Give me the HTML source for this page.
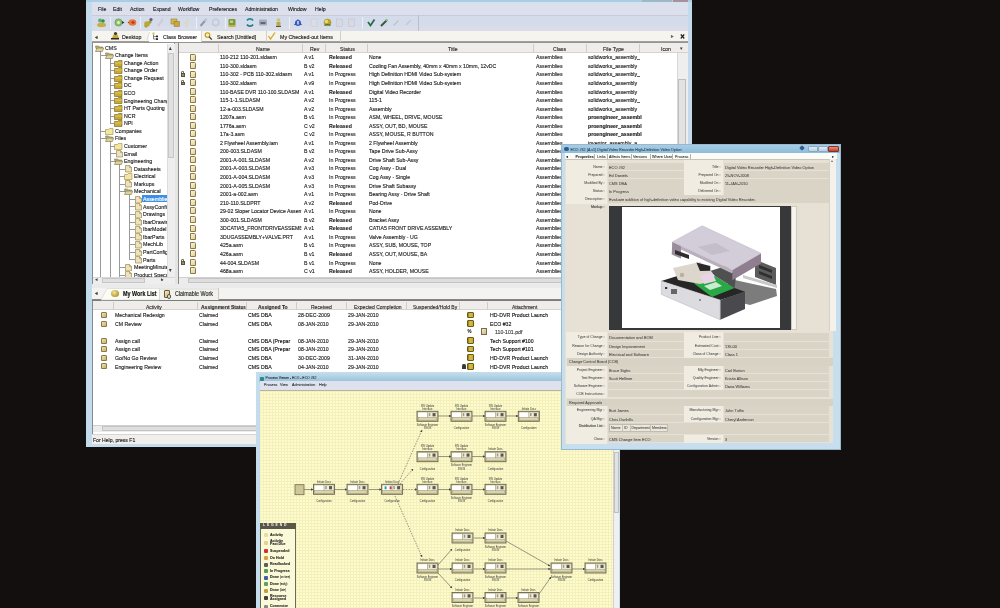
<!DOCTYPE html><html><head><meta charset="utf-8"><style>
html,body{margin:0;padding:0;}
body{width:1000px;height:608px;overflow:hidden;position:relative;background:#130f0f;font-family:"Liberation Sans",sans-serif;}
div{box-sizing:border-box;}
.t{position:absolute;white-space:nowrap;line-height:1;-webkit-text-stroke:0.15px currentColor;}
.s{-webkit-text-stroke:0.05px currentColor;}
</style></head><body><div style="position:absolute;left:0;top:0;width:1000px;height:608px;overflow:hidden;will-change:transform;">
<div style="position:absolute;left:86px;top:0px;width:606px;height:447px;background:#c3dbeb;"></div>
<div style="position:absolute;left:86px;top:0px;width:606px;height:2px;background:#a9cde2;"></div>
<div style="position:absolute;left:92px;top:2px;width:596px;height:1.5px;background:#d2e2ee;"></div>
<div style="position:absolute;left:641.5px;top:0px;width:15px;height:2px;background:#9fb8c8;"></div>
<div style="position:absolute;left:657px;top:0px;width:15px;height:2px;background:#9fb8c8;"></div>
<div style="position:absolute;left:672.5px;top:0px;width:15.5px;height:2px;background:#a8909c;"></div>
<div style="position:absolute;left:92px;top:3px;width:596px;height:12px;background:#dcdfec;"></div>
<div class="t" style="left:98px;top:6.40px;font-size:6.08px;color:#1c1c1c;font-weight:normal;transform:scaleX(0.855);transform-origin:0 0;">File</div>
<div class="t" style="left:113px;top:6.40px;font-size:6.08px;color:#1c1c1c;font-weight:normal;transform:scaleX(0.855);transform-origin:0 0;">Edit</div>
<div class="t" style="left:130px;top:6.40px;font-size:6.08px;color:#1c1c1c;font-weight:normal;transform:scaleX(0.855);transform-origin:0 0;">Action</div>
<div class="t" style="left:153px;top:6.40px;font-size:6.08px;color:#1c1c1c;font-weight:normal;transform:scaleX(0.855);transform-origin:0 0;">Expand</div>
<div class="t" style="left:178px;top:6.40px;font-size:6.08px;color:#1c1c1c;font-weight:normal;transform:scaleX(0.855);transform-origin:0 0;">Workflow</div>
<div class="t" style="left:209px;top:6.40px;font-size:6.08px;color:#1c1c1c;font-weight:normal;transform:scaleX(0.855);transform-origin:0 0;">Preferences</div>
<div class="t" style="left:245px;top:6.40px;font-size:6.08px;color:#1c1c1c;font-weight:normal;transform:scaleX(0.855);transform-origin:0 0;">Administration</div>
<div class="t" style="left:288px;top:6.40px;font-size:6.08px;color:#1c1c1c;font-weight:normal;transform:scaleX(0.855);transform-origin:0 0;">Window</div>
<div class="t" style="left:315px;top:6.40px;font-size:6.08px;color:#1c1c1c;font-weight:normal;transform:scaleX(0.855);transform-origin:0 0;">Help</div>
<div style="position:absolute;left:92px;top:14.5px;width:596px;height:16.5px;background:linear-gradient(#d4dbeb 0,#d4dbeb 65%,#d9dde9 66%,#d9dde9 100%);border-top:1px solid #cbcadb;"></div>
<div style="position:absolute;left:92px;top:31px;width:596px;height:11px;background:#f5f4ee;"></div>
<div style="position:absolute;left:92px;top:41px;width:596px;height:2.5px;background:linear-gradient(#a8a6a2,#85837f);"></div>
<div style="position:absolute;left:149px;top:31px;width:53px;height:11px;background:#ffffff;border-right:1px solid #d6d5cf;"></div>
<div class="t" style="left:95px;top:33.90px;font-size:6.20px;color:#3a3a3a;font-weight:normal;transform:scaleX(0.855);transform-origin:0 0;">◂</div>
<div class="t" style="left:122px;top:33.90px;font-size:6.20px;color:#1c1c1c;font-weight:normal;transform:scaleX(0.855);transform-origin:0 0;">Desktop</div>
<div class="t" style="left:163px;top:33.90px;font-size:6.20px;color:#1c1c1c;font-weight:normal;transform:scaleX(0.855);transform-origin:0 0;">Class Browser</div>
<div class="t" style="left:217px;top:33.90px;font-size:6.20px;color:#1c1c1c;font-weight:normal;transform:scaleX(0.855);transform-origin:0 0;">Search  [Untitled]</div>
<div class="t" style="left:280px;top:33.90px;font-size:6.20px;color:#1c1c1c;font-weight:normal;transform:scaleX(0.855);transform-origin:0 0;">My Checked-out Items</div>
<div style="position:absolute;left:266px;top:31px;width:1px;height:11px;background:#d0cfc8;"></div>
<div style="position:absolute;left:340px;top:31px;width:1px;height:11px;background:#d0cfc8;"></div>
<div class="t" style="left:671px;top:33.90px;font-size:5.85px;color:#666;font-weight:normal;transform:scaleX(0.855);transform-origin:0 0;">▸</div>
<div class="t" style="left:680px;top:33.40px;font-size:7.02px;color:#1c1c1c;font-weight:bold;transform:scaleX(0.855);transform-origin:0 0;">✕</div>
<div style="position:absolute;left:92px;top:43px;width:83px;height:241px;background:#fff;border:1px solid #8a8a8a;border-top:none;"></div>
<div style="position:absolute;left:167px;top:44px;width:8px;height:233px;background:#ebebeb;border-left:1px solid #d8d8d8;"></div>
<div style="position:absolute;left:93px;top:277px;width:74px;height:7px;background:#ececec;"></div>
<div style="position:absolute;left:174px;top:43px;width:4px;height:241px;background:#e4e4e2;border-left:1px solid #9a9a9a;"></div>
<div style="position:absolute;left:178px;top:43px;width:510px;height:241px;background:#fff;border-left:1px solid #8a8a8a;"></div>
<div style="position:absolute;left:179px;top:43px;width:509px;height:10px;background:#efedeb;border-bottom:1px solid #d6d3cf;"></div>
<div class="t" style="left:256px;top:45.90px;font-size:6.08px;color:#2a2a2a;font-weight:normal;transform:scaleX(0.855);transform-origin:0 0;">Name</div>
<div class="t" style="left:310px;top:45.90px;font-size:6.08px;color:#2a2a2a;font-weight:normal;transform:scaleX(0.855);transform-origin:0 0;">Rev</div>
<div class="t" style="left:340px;top:45.90px;font-size:6.08px;color:#2a2a2a;font-weight:normal;transform:scaleX(0.855);transform-origin:0 0;">Status</div>
<div class="t" style="left:448px;top:45.90px;font-size:6.08px;color:#2a2a2a;font-weight:normal;transform:scaleX(0.855);transform-origin:0 0;">Title</div>
<div class="t" style="left:553px;top:45.90px;font-size:6.08px;color:#2a2a2a;font-weight:normal;transform:scaleX(0.855);transform-origin:0 0;">Class</div>
<div class="t" style="left:603px;top:45.90px;font-size:6.08px;color:#2a2a2a;font-weight:normal;transform:scaleX(0.855);transform-origin:0 0;">File Type</div>
<div class="t" style="left:661px;top:45.90px;font-size:6.08px;color:#2a2a2a;font-weight:normal;transform:scaleX(0.855);transform-origin:0 0;">Icon</div>
<div style="position:absolute;left:218px;top:44px;width:1px;height:9px;background:#d0cdc8;"></div>
<div style="position:absolute;left:302px;top:44px;width:1px;height:9px;background:#d0cdc8;"></div>
<div style="position:absolute;left:325px;top:44px;width:1px;height:9px;background:#d0cdc8;"></div>
<div style="position:absolute;left:367px;top:44px;width:1px;height:9px;background:#d0cdc8;"></div>
<div style="position:absolute;left:533px;top:44px;width:1px;height:9px;background:#d0cdc8;"></div>
<div style="position:absolute;left:586px;top:44px;width:1px;height:9px;background:#d0cdc8;"></div>
<div style="position:absolute;left:639px;top:44px;width:1px;height:9px;background:#d0cdc8;"></div>
<div style="position:absolute;left:190px;top:53.5px;width:6px;height:7px;background:linear-gradient(135deg,#fbf4d8,#e0cf98);border:0.8px solid #8a7a48;border-radius:0 1.5px 0 0;"></div>
<div class="t" style="left:220px;top:54.30px;font-size:6.08px;color:#1c1c1c;font-weight:normal;transform:scaleX(0.855);transform-origin:0 0;width:95px;overflow:hidden;">110-212 110-201.sldasm</div>
<div class="t" style="left:304px;top:54.30px;font-size:6.08px;color:#1c1c1c;font-weight:normal;transform:scaleX(0.855);transform-origin:0 0;">A v1</div>
<div class="t" style="left:329px;top:54.30px;font-size:6.08px;color:#2a2a2a;font-weight:bold;transform:scaleX(0.855);transform-origin:0 0;">Released</div>
<div class="t" style="left:369px;top:54.30px;font-size:6.08px;color:#1c1c1c;font-weight:normal;transform:scaleX(0.855);transform-origin:0 0;width:190px;overflow:hidden;">None</div>
<div class="t" style="left:536px;top:54.30px;font-size:6.08px;color:#2a2a2a;font-weight:normal;transform:scaleX(0.855);transform-origin:0 0;">Assemblies</div>
<div class="t" style="left:588px;top:54.30px;font-size:6.08px;color:#1c1c1c;font-weight:normal;transform:scaleX(0.855);transform-origin:0 0;width:82px;overflow:hidden;">solidworks_assembly_</div>
<div style="position:absolute;left:190px;top:62.05px;width:6px;height:7px;background:linear-gradient(135deg,#fbf4d8,#e0cf98);border:0.8px solid #8a7a48;border-radius:0 1.5px 0 0;"></div>
<div class="t" style="left:220px;top:62.85px;font-size:6.08px;color:#1c1c1c;font-weight:normal;transform:scaleX(0.855);transform-origin:0 0;width:95px;overflow:hidden;">110-300.sldasm</div>
<div class="t" style="left:304px;top:62.85px;font-size:6.08px;color:#1c1c1c;font-weight:normal;transform:scaleX(0.855);transform-origin:0 0;">B v2</div>
<div class="t" style="left:329px;top:62.85px;font-size:6.08px;color:#2a2a2a;font-weight:bold;transform:scaleX(0.855);transform-origin:0 0;">Released</div>
<div class="t" style="left:369px;top:62.85px;font-size:6.08px;color:#1c1c1c;font-weight:normal;transform:scaleX(0.855);transform-origin:0 0;width:190px;overflow:hidden;">Cooling Fan Assembly, 40mm x 40mm x 10mm, 12vDC</div>
<div class="t" style="left:536px;top:62.85px;font-size:6.08px;color:#2a2a2a;font-weight:normal;transform:scaleX(0.855);transform-origin:0 0;">Assemblies</div>
<div class="t" style="left:588px;top:62.85px;font-size:6.08px;color:#1c1c1c;font-weight:normal;transform:scaleX(0.855);transform-origin:0 0;width:82px;overflow:hidden;">solidworks_assembly</div>
<div style="position:absolute;left:181px;top:71.1px;width:3.4px;height:3px;border:0.8px solid #6a6050;border-bottom:none;border-radius:1.5px 1.5px 0 0;"></div>
<div style="position:absolute;left:180.5px;top:73.3px;width:4.4px;height:3.5px;background:#9a8e70;border:0.5px solid #5a5040;"></div>
<div style="position:absolute;left:190px;top:70.6px;width:6px;height:7px;background:linear-gradient(135deg,#fbf4d8,#e0cf98);border:0.8px solid #8a7a48;border-radius:0 1.5px 0 0;"></div>
<div class="t" style="left:220px;top:71.40px;font-size:6.08px;color:#1c1c1c;font-weight:normal;transform:scaleX(0.855);transform-origin:0 0;width:95px;overflow:hidden;">110-302 - PCB 110-302.sldasm</div>
<div class="t" style="left:304px;top:71.40px;font-size:6.08px;color:#1c1c1c;font-weight:normal;transform:scaleX(0.855);transform-origin:0 0;">A v1</div>
<div class="t" style="left:329px;top:71.40px;font-size:6.08px;color:#2a2a2a;font-weight:normal;transform:scaleX(0.855);transform-origin:0 0;">In Progress</div>
<div class="t" style="left:369px;top:71.40px;font-size:6.08px;color:#1c1c1c;font-weight:normal;transform:scaleX(0.855);transform-origin:0 0;width:190px;overflow:hidden;">High Definition HDMI Video Sub-system</div>
<div class="t" style="left:536px;top:71.40px;font-size:6.08px;color:#2a2a2a;font-weight:normal;transform:scaleX(0.855);transform-origin:0 0;">Assemblies</div>
<div class="t" style="left:588px;top:71.40px;font-size:6.08px;color:#1c1c1c;font-weight:normal;transform:scaleX(0.855);transform-origin:0 0;width:82px;overflow:hidden;">solidworks_assembly_</div>
<div style="position:absolute;left:181px;top:79.65px;width:3.4px;height:3px;border:0.8px solid #6a6050;border-bottom:none;border-radius:1.5px 1.5px 0 0;"></div>
<div style="position:absolute;left:180.5px;top:81.85000000000001px;width:4.4px;height:3.5px;background:#9a8e70;border:0.5px solid #5a5040;"></div>
<div style="position:absolute;left:190px;top:79.15px;width:6px;height:7px;background:linear-gradient(135deg,#fbf4d8,#e0cf98);border:0.8px solid #8a7a48;border-radius:0 1.5px 0 0;"></div>
<div class="t" style="left:220px;top:79.95px;font-size:6.08px;color:#1c1c1c;font-weight:normal;transform:scaleX(0.855);transform-origin:0 0;width:95px;overflow:hidden;">110-302.sldasm</div>
<div class="t" style="left:304px;top:79.95px;font-size:6.08px;color:#1c1c1c;font-weight:normal;transform:scaleX(0.855);transform-origin:0 0;">A v9</div>
<div class="t" style="left:329px;top:79.95px;font-size:6.08px;color:#2a2a2a;font-weight:normal;transform:scaleX(0.855);transform-origin:0 0;">In Progress</div>
<div class="t" style="left:369px;top:79.95px;font-size:6.08px;color:#1c1c1c;font-weight:normal;transform:scaleX(0.855);transform-origin:0 0;width:190px;overflow:hidden;">High Definition HDMI Video Sub-system</div>
<div class="t" style="left:536px;top:79.95px;font-size:6.08px;color:#2a2a2a;font-weight:normal;transform:scaleX(0.855);transform-origin:0 0;">Assemblies</div>
<div class="t" style="left:588px;top:79.95px;font-size:6.08px;color:#1c1c1c;font-weight:normal;transform:scaleX(0.855);transform-origin:0 0;width:82px;overflow:hidden;">solidworks_assembly</div>
<div style="position:absolute;left:190px;top:87.7px;width:6px;height:7px;background:linear-gradient(135deg,#fbf4d8,#e0cf98);border:0.8px solid #8a7a48;border-radius:0 1.5px 0 0;"></div>
<div class="t" style="left:220px;top:88.50px;font-size:6.08px;color:#1c1c1c;font-weight:normal;transform:scaleX(0.855);transform-origin:0 0;width:95px;overflow:hidden;">110-BASE DVR 110-100.SLDASM</div>
<div class="t" style="left:304px;top:88.50px;font-size:6.08px;color:#1c1c1c;font-weight:normal;transform:scaleX(0.855);transform-origin:0 0;">A v1</div>
<div class="t" style="left:329px;top:88.50px;font-size:6.08px;color:#2a2a2a;font-weight:bold;transform:scaleX(0.855);transform-origin:0 0;">Released</div>
<div class="t" style="left:369px;top:88.50px;font-size:6.08px;color:#1c1c1c;font-weight:normal;transform:scaleX(0.855);transform-origin:0 0;width:190px;overflow:hidden;">Digital Video Recorder</div>
<div class="t" style="left:536px;top:88.50px;font-size:6.08px;color:#2a2a2a;font-weight:normal;transform:scaleX(0.855);transform-origin:0 0;">Assemblies</div>
<div class="t" style="left:588px;top:88.50px;font-size:6.08px;color:#1c1c1c;font-weight:normal;transform:scaleX(0.855);transform-origin:0 0;width:82px;overflow:hidden;">solidworks_assembly</div>
<div style="position:absolute;left:190px;top:96.25px;width:6px;height:7px;background:linear-gradient(135deg,#fbf4d8,#e0cf98);border:0.8px solid #8a7a48;border-radius:0 1.5px 0 0;"></div>
<div class="t" style="left:220px;top:97.05px;font-size:6.08px;color:#1c1c1c;font-weight:normal;transform:scaleX(0.855);transform-origin:0 0;width:95px;overflow:hidden;">115-1-1.SLDASM</div>
<div class="t" style="left:304px;top:97.05px;font-size:6.08px;color:#1c1c1c;font-weight:normal;transform:scaleX(0.855);transform-origin:0 0;">A v2</div>
<div class="t" style="left:329px;top:97.05px;font-size:6.08px;color:#2a2a2a;font-weight:normal;transform:scaleX(0.855);transform-origin:0 0;">In Progress</div>
<div class="t" style="left:369px;top:97.05px;font-size:6.08px;color:#1c1c1c;font-weight:normal;transform:scaleX(0.855);transform-origin:0 0;width:190px;overflow:hidden;">115-1</div>
<div class="t" style="left:536px;top:97.05px;font-size:6.08px;color:#2a2a2a;font-weight:normal;transform:scaleX(0.855);transform-origin:0 0;">Assemblies</div>
<div class="t" style="left:588px;top:97.05px;font-size:6.08px;color:#1c1c1c;font-weight:normal;transform:scaleX(0.855);transform-origin:0 0;width:82px;overflow:hidden;">solidworks_assembly_</div>
<div style="position:absolute;left:190px;top:104.80000000000001px;width:6px;height:7px;background:linear-gradient(135deg,#fbf4d8,#e0cf98);border:0.8px solid #8a7a48;border-radius:0 1.5px 0 0;"></div>
<div class="t" style="left:220px;top:105.60px;font-size:6.08px;color:#1c1c1c;font-weight:normal;transform:scaleX(0.855);transform-origin:0 0;width:95px;overflow:hidden;">12-a-003.SLDASM</div>
<div class="t" style="left:304px;top:105.60px;font-size:6.08px;color:#1c1c1c;font-weight:normal;transform:scaleX(0.855);transform-origin:0 0;">A v2</div>
<div class="t" style="left:329px;top:105.60px;font-size:6.08px;color:#2a2a2a;font-weight:normal;transform:scaleX(0.855);transform-origin:0 0;">In Progress</div>
<div class="t" style="left:369px;top:105.60px;font-size:6.08px;color:#1c1c1c;font-weight:normal;transform:scaleX(0.855);transform-origin:0 0;width:190px;overflow:hidden;">Assembly</div>
<div class="t" style="left:536px;top:105.60px;font-size:6.08px;color:#2a2a2a;font-weight:normal;transform:scaleX(0.855);transform-origin:0 0;">Assemblies</div>
<div class="t" style="left:588px;top:105.60px;font-size:6.08px;color:#1c1c1c;font-weight:normal;transform:scaleX(0.855);transform-origin:0 0;width:82px;overflow:hidden;">solidworks_assembly</div>
<div style="position:absolute;left:190px;top:113.35000000000001px;width:6px;height:7px;background:linear-gradient(135deg,#fbf4d8,#e0cf98);border:0.8px solid #8a7a48;border-radius:0 1.5px 0 0;"></div>
<div class="t" style="left:220px;top:114.15px;font-size:6.08px;color:#1c1c1c;font-weight:normal;transform:scaleX(0.855);transform-origin:0 0;width:95px;overflow:hidden;">1207a.asm</div>
<div class="t" style="left:304px;top:114.15px;font-size:6.08px;color:#1c1c1c;font-weight:normal;transform:scaleX(0.855);transform-origin:0 0;">B v1</div>
<div class="t" style="left:329px;top:114.15px;font-size:6.08px;color:#2a2a2a;font-weight:normal;transform:scaleX(0.855);transform-origin:0 0;">In Progress</div>
<div class="t" style="left:369px;top:114.15px;font-size:6.08px;color:#1c1c1c;font-weight:normal;transform:scaleX(0.855);transform-origin:0 0;width:190px;overflow:hidden;">ASM, WHEEL, DRIVE, MOUSE</div>
<div class="t" style="left:536px;top:114.15px;font-size:6.08px;color:#2a2a2a;font-weight:normal;transform:scaleX(0.855);transform-origin:0 0;">Assemblies</div>
<div class="t" style="left:588px;top:114.15px;font-size:6.08px;color:#1c1c1c;font-weight:bold;transform:scaleX(0.855);transform-origin:0 0;width:82px;overflow:hidden;">proengineer_assembl</div>
<div style="position:absolute;left:190px;top:121.9px;width:6px;height:7px;background:linear-gradient(135deg,#fbf4d8,#e0cf98);border:0.8px solid #8a7a48;border-radius:0 1.5px 0 0;"></div>
<div class="t" style="left:220px;top:122.70px;font-size:6.08px;color:#1c1c1c;font-weight:normal;transform:scaleX(0.855);transform-origin:0 0;width:95px;overflow:hidden;">1776a.asm</div>
<div class="t" style="left:304px;top:122.70px;font-size:6.08px;color:#1c1c1c;font-weight:normal;transform:scaleX(0.855);transform-origin:0 0;">C v2</div>
<div class="t" style="left:329px;top:122.70px;font-size:6.08px;color:#2a2a2a;font-weight:bold;transform:scaleX(0.855);transform-origin:0 0;">Released</div>
<div class="t" style="left:369px;top:122.70px;font-size:6.08px;color:#1c1c1c;font-weight:normal;transform:scaleX(0.855);transform-origin:0 0;width:190px;overflow:hidden;">ASSY, OUT, BD, MOUSE</div>
<div class="t" style="left:536px;top:122.70px;font-size:6.08px;color:#2a2a2a;font-weight:normal;transform:scaleX(0.855);transform-origin:0 0;">Assemblies</div>
<div class="t" style="left:588px;top:122.70px;font-size:6.08px;color:#1c1c1c;font-weight:bold;transform:scaleX(0.855);transform-origin:0 0;width:82px;overflow:hidden;">proengineer_assembl</div>
<div style="position:absolute;left:190px;top:130.45px;width:6px;height:7px;background:linear-gradient(135deg,#fbf4d8,#e0cf98);border:0.8px solid #8a7a48;border-radius:0 1.5px 0 0;"></div>
<div class="t" style="left:220px;top:131.25px;font-size:6.08px;color:#1c1c1c;font-weight:normal;transform:scaleX(0.855);transform-origin:0 0;width:95px;overflow:hidden;">17a-3.asm</div>
<div class="t" style="left:304px;top:131.25px;font-size:6.08px;color:#1c1c1c;font-weight:normal;transform:scaleX(0.855);transform-origin:0 0;">C v2</div>
<div class="t" style="left:329px;top:131.25px;font-size:6.08px;color:#2a2a2a;font-weight:normal;transform:scaleX(0.855);transform-origin:0 0;">In Progress</div>
<div class="t" style="left:369px;top:131.25px;font-size:6.08px;color:#1c1c1c;font-weight:normal;transform:scaleX(0.855);transform-origin:0 0;width:190px;overflow:hidden;">ASSY, MOUSE, R BUTTON</div>
<div class="t" style="left:536px;top:131.25px;font-size:6.08px;color:#2a2a2a;font-weight:normal;transform:scaleX(0.855);transform-origin:0 0;">Assemblies</div>
<div class="t" style="left:588px;top:131.25px;font-size:6.08px;color:#1c1c1c;font-weight:bold;transform:scaleX(0.855);transform-origin:0 0;width:82px;overflow:hidden;">proengineer_assembl</div>
<div style="position:absolute;left:190px;top:139.0px;width:6px;height:7px;background:linear-gradient(135deg,#fbf4d8,#e0cf98);border:0.8px solid #8a7a48;border-radius:0 1.5px 0 0;"></div>
<div class="t" style="left:220px;top:139.80px;font-size:6.08px;color:#1c1c1c;font-weight:normal;transform:scaleX(0.855);transform-origin:0 0;width:95px;overflow:hidden;">2 Flywheel Assembly.iam</div>
<div class="t" style="left:304px;top:139.80px;font-size:6.08px;color:#1c1c1c;font-weight:normal;transform:scaleX(0.855);transform-origin:0 0;">A v1</div>
<div class="t" style="left:329px;top:139.80px;font-size:6.08px;color:#2a2a2a;font-weight:normal;transform:scaleX(0.855);transform-origin:0 0;">In Progress</div>
<div class="t" style="left:369px;top:139.80px;font-size:6.08px;color:#1c1c1c;font-weight:normal;transform:scaleX(0.855);transform-origin:0 0;width:190px;overflow:hidden;">2 Flywheel Assembly</div>
<div class="t" style="left:536px;top:139.80px;font-size:6.08px;color:#2a2a2a;font-weight:normal;transform:scaleX(0.855);transform-origin:0 0;">Assemblies</div>
<div class="t" style="left:588px;top:139.80px;font-size:6.08px;color:#1c1c1c;font-weight:normal;transform:scaleX(0.855);transform-origin:0 0;width:82px;overflow:hidden;">inventor_assembly_a</div>
<div style="position:absolute;left:190px;top:147.55px;width:6px;height:7px;background:linear-gradient(135deg,#fbf4d8,#e0cf98);border:0.8px solid #8a7a48;border-radius:0 1.5px 0 0;"></div>
<div class="t" style="left:220px;top:148.35px;font-size:6.08px;color:#1c1c1c;font-weight:normal;transform:scaleX(0.855);transform-origin:0 0;width:95px;overflow:hidden;">200-003.SLDASM</div>
<div class="t" style="left:304px;top:148.35px;font-size:6.08px;color:#1c1c1c;font-weight:normal;transform:scaleX(0.855);transform-origin:0 0;">B v2</div>
<div class="t" style="left:329px;top:148.35px;font-size:6.08px;color:#2a2a2a;font-weight:normal;transform:scaleX(0.855);transform-origin:0 0;">In Progress</div>
<div class="t" style="left:369px;top:148.35px;font-size:6.08px;color:#1c1c1c;font-weight:normal;transform:scaleX(0.855);transform-origin:0 0;width:190px;overflow:hidden;">Tape Drive Sub-Assy</div>
<div class="t" style="left:536px;top:148.35px;font-size:6.08px;color:#2a2a2a;font-weight:normal;transform:scaleX(0.855);transform-origin:0 0;">Assemblies</div>
<div class="t" style="left:588px;top:148.35px;font-size:6.08px;color:#1c1c1c;font-weight:normal;transform:scaleX(0.855);transform-origin:0 0;width:82px;overflow:hidden;">solidworks_assembly</div>
<div style="position:absolute;left:190px;top:156.10000000000002px;width:6px;height:7px;background:linear-gradient(135deg,#fbf4d8,#e0cf98);border:0.8px solid #8a7a48;border-radius:0 1.5px 0 0;"></div>
<div class="t" style="left:220px;top:156.90px;font-size:6.08px;color:#1c1c1c;font-weight:normal;transform:scaleX(0.855);transform-origin:0 0;width:95px;overflow:hidden;">2001-A-001.SLDASM</div>
<div class="t" style="left:304px;top:156.90px;font-size:6.08px;color:#1c1c1c;font-weight:normal;transform:scaleX(0.855);transform-origin:0 0;">A v2</div>
<div class="t" style="left:329px;top:156.90px;font-size:6.08px;color:#2a2a2a;font-weight:normal;transform:scaleX(0.855);transform-origin:0 0;">In Progress</div>
<div class="t" style="left:369px;top:156.90px;font-size:6.08px;color:#1c1c1c;font-weight:normal;transform:scaleX(0.855);transform-origin:0 0;width:190px;overflow:hidden;">Drive Shaft Sub-Assy</div>
<div class="t" style="left:536px;top:156.90px;font-size:6.08px;color:#2a2a2a;font-weight:normal;transform:scaleX(0.855);transform-origin:0 0;">Assemblies</div>
<div class="t" style="left:588px;top:156.90px;font-size:6.08px;color:#1c1c1c;font-weight:normal;transform:scaleX(0.855);transform-origin:0 0;width:82px;overflow:hidden;">solidworks_assembly</div>
<div style="position:absolute;left:190px;top:164.65px;width:6px;height:7px;background:linear-gradient(135deg,#fbf4d8,#e0cf98);border:0.8px solid #8a7a48;border-radius:0 1.5px 0 0;"></div>
<div class="t" style="left:220px;top:165.45px;font-size:6.08px;color:#1c1c1c;font-weight:normal;transform:scaleX(0.855);transform-origin:0 0;width:95px;overflow:hidden;">2001-A-003.SLDASM</div>
<div class="t" style="left:304px;top:165.45px;font-size:6.08px;color:#1c1c1c;font-weight:normal;transform:scaleX(0.855);transform-origin:0 0;">A v3</div>
<div class="t" style="left:329px;top:165.45px;font-size:6.08px;color:#2a2a2a;font-weight:normal;transform:scaleX(0.855);transform-origin:0 0;">In Progress</div>
<div class="t" style="left:369px;top:165.45px;font-size:6.08px;color:#1c1c1c;font-weight:normal;transform:scaleX(0.855);transform-origin:0 0;width:190px;overflow:hidden;">Cog Assy - Dual</div>
<div class="t" style="left:536px;top:165.45px;font-size:6.08px;color:#2a2a2a;font-weight:normal;transform:scaleX(0.855);transform-origin:0 0;">Assemblies</div>
<div class="t" style="left:588px;top:165.45px;font-size:6.08px;color:#1c1c1c;font-weight:normal;transform:scaleX(0.855);transform-origin:0 0;width:82px;overflow:hidden;">solidworks_assembly</div>
<div style="position:absolute;left:190px;top:173.20000000000002px;width:6px;height:7px;background:linear-gradient(135deg,#fbf4d8,#e0cf98);border:0.8px solid #8a7a48;border-radius:0 1.5px 0 0;"></div>
<div class="t" style="left:220px;top:174.00px;font-size:6.08px;color:#1c1c1c;font-weight:normal;transform:scaleX(0.855);transform-origin:0 0;width:95px;overflow:hidden;">2001-A-004.SLDASM</div>
<div class="t" style="left:304px;top:174.00px;font-size:6.08px;color:#1c1c1c;font-weight:normal;transform:scaleX(0.855);transform-origin:0 0;">A v3</div>
<div class="t" style="left:329px;top:174.00px;font-size:6.08px;color:#2a2a2a;font-weight:normal;transform:scaleX(0.855);transform-origin:0 0;">In Progress</div>
<div class="t" style="left:369px;top:174.00px;font-size:6.08px;color:#1c1c1c;font-weight:normal;transform:scaleX(0.855);transform-origin:0 0;width:190px;overflow:hidden;">Cog Assy - Single</div>
<div class="t" style="left:536px;top:174.00px;font-size:6.08px;color:#2a2a2a;font-weight:normal;transform:scaleX(0.855);transform-origin:0 0;">Assemblies</div>
<div class="t" style="left:588px;top:174.00px;font-size:6.08px;color:#1c1c1c;font-weight:normal;transform:scaleX(0.855);transform-origin:0 0;width:82px;overflow:hidden;">solidworks_assembly</div>
<div style="position:absolute;left:190px;top:181.75px;width:6px;height:7px;background:linear-gradient(135deg,#fbf4d8,#e0cf98);border:0.8px solid #8a7a48;border-radius:0 1.5px 0 0;"></div>
<div class="t" style="left:220px;top:182.55px;font-size:6.08px;color:#1c1c1c;font-weight:normal;transform:scaleX(0.855);transform-origin:0 0;width:95px;overflow:hidden;">2001-A-005.SLDASM</div>
<div class="t" style="left:304px;top:182.55px;font-size:6.08px;color:#1c1c1c;font-weight:normal;transform:scaleX(0.855);transform-origin:0 0;">A v3</div>
<div class="t" style="left:329px;top:182.55px;font-size:6.08px;color:#2a2a2a;font-weight:normal;transform:scaleX(0.855);transform-origin:0 0;">In Progress</div>
<div class="t" style="left:369px;top:182.55px;font-size:6.08px;color:#1c1c1c;font-weight:normal;transform:scaleX(0.855);transform-origin:0 0;width:190px;overflow:hidden;">Drive Shaft Subassy</div>
<div class="t" style="left:536px;top:182.55px;font-size:6.08px;color:#2a2a2a;font-weight:normal;transform:scaleX(0.855);transform-origin:0 0;">Assemblies</div>
<div class="t" style="left:588px;top:182.55px;font-size:6.08px;color:#1c1c1c;font-weight:normal;transform:scaleX(0.855);transform-origin:0 0;width:82px;overflow:hidden;">solidworks_assembly</div>
<div style="position:absolute;left:190px;top:190.3px;width:6px;height:7px;background:linear-gradient(135deg,#fbf4d8,#e0cf98);border:0.8px solid #8a7a48;border-radius:0 1.5px 0 0;"></div>
<div class="t" style="left:220px;top:191.10px;font-size:6.08px;color:#1c1c1c;font-weight:normal;transform:scaleX(0.855);transform-origin:0 0;width:95px;overflow:hidden;">2001-a-002.asm</div>
<div class="t" style="left:304px;top:191.10px;font-size:6.08px;color:#1c1c1c;font-weight:normal;transform:scaleX(0.855);transform-origin:0 0;">A v1</div>
<div class="t" style="left:329px;top:191.10px;font-size:6.08px;color:#2a2a2a;font-weight:normal;transform:scaleX(0.855);transform-origin:0 0;">In Progress</div>
<div class="t" style="left:369px;top:191.10px;font-size:6.08px;color:#1c1c1c;font-weight:normal;transform:scaleX(0.855);transform-origin:0 0;width:190px;overflow:hidden;">Bearing Assy - Drive Shaft</div>
<div class="t" style="left:536px;top:191.10px;font-size:6.08px;color:#2a2a2a;font-weight:normal;transform:scaleX(0.855);transform-origin:0 0;">Assemblies</div>
<div class="t" style="left:588px;top:191.10px;font-size:6.08px;color:#1c1c1c;font-weight:normal;transform:scaleX(0.855);transform-origin:0 0;width:82px;overflow:hidden;">proengineer_assembl</div>
<div style="position:absolute;left:190px;top:198.85000000000002px;width:6px;height:7px;background:linear-gradient(135deg,#fbf4d8,#e0cf98);border:0.8px solid #8a7a48;border-radius:0 1.5px 0 0;"></div>
<div class="t" style="left:220px;top:199.65px;font-size:6.08px;color:#1c1c1c;font-weight:normal;transform:scaleX(0.855);transform-origin:0 0;width:95px;overflow:hidden;">210-110.SLDPRT</div>
<div class="t" style="left:304px;top:199.65px;font-size:6.08px;color:#1c1c1c;font-weight:normal;transform:scaleX(0.855);transform-origin:0 0;">A v2</div>
<div class="t" style="left:329px;top:199.65px;font-size:6.08px;color:#2a2a2a;font-weight:bold;transform:scaleX(0.855);transform-origin:0 0;">Released</div>
<div class="t" style="left:369px;top:199.65px;font-size:6.08px;color:#1c1c1c;font-weight:normal;transform:scaleX(0.855);transform-origin:0 0;width:190px;overflow:hidden;">Pod-Drive</div>
<div class="t" style="left:536px;top:199.65px;font-size:6.08px;color:#2a2a2a;font-weight:normal;transform:scaleX(0.855);transform-origin:0 0;">Assemblies</div>
<div class="t" style="left:588px;top:199.65px;font-size:6.08px;color:#1c1c1c;font-weight:normal;transform:scaleX(0.855);transform-origin:0 0;width:82px;overflow:hidden;">solidworks_part</div>
<div style="position:absolute;left:190px;top:207.4px;width:6px;height:7px;background:linear-gradient(135deg,#fbf4d8,#e0cf98);border:0.8px solid #8a7a48;border-radius:0 1.5px 0 0;"></div>
<div class="t" style="left:220px;top:208.20px;font-size:6.08px;color:#1c1c1c;font-weight:normal;transform:scaleX(0.855);transform-origin:0 0;width:95px;overflow:hidden;">29-02 Sloper Locator Device Assembly</div>
<div class="t" style="left:304px;top:208.20px;font-size:6.08px;color:#1c1c1c;font-weight:normal;transform:scaleX(0.855);transform-origin:0 0;">A v1</div>
<div class="t" style="left:329px;top:208.20px;font-size:6.08px;color:#2a2a2a;font-weight:normal;transform:scaleX(0.855);transform-origin:0 0;">In Progress</div>
<div class="t" style="left:369px;top:208.20px;font-size:6.08px;color:#1c1c1c;font-weight:normal;transform:scaleX(0.855);transform-origin:0 0;width:190px;overflow:hidden;">None</div>
<div class="t" style="left:536px;top:208.20px;font-size:6.08px;color:#2a2a2a;font-weight:normal;transform:scaleX(0.855);transform-origin:0 0;">Assemblies</div>
<div class="t" style="left:588px;top:208.20px;font-size:6.08px;color:#1c1c1c;font-weight:normal;transform:scaleX(0.855);transform-origin:0 0;width:82px;overflow:hidden;">solidworks_assembly</div>
<div style="position:absolute;left:190px;top:215.95000000000002px;width:6px;height:7px;background:linear-gradient(135deg,#fbf4d8,#e0cf98);border:0.8px solid #8a7a48;border-radius:0 1.5px 0 0;"></div>
<div class="t" style="left:220px;top:216.75px;font-size:6.08px;color:#1c1c1c;font-weight:normal;transform:scaleX(0.855);transform-origin:0 0;width:95px;overflow:hidden;">300-001.SLDASM</div>
<div class="t" style="left:304px;top:216.75px;font-size:6.08px;color:#1c1c1c;font-weight:normal;transform:scaleX(0.855);transform-origin:0 0;">B v2</div>
<div class="t" style="left:329px;top:216.75px;font-size:6.08px;color:#2a2a2a;font-weight:bold;transform:scaleX(0.855);transform-origin:0 0;">Released</div>
<div class="t" style="left:369px;top:216.75px;font-size:6.08px;color:#1c1c1c;font-weight:normal;transform:scaleX(0.855);transform-origin:0 0;width:190px;overflow:hidden;">Bracket Assy</div>
<div class="t" style="left:536px;top:216.75px;font-size:6.08px;color:#2a2a2a;font-weight:normal;transform:scaleX(0.855);transform-origin:0 0;">Assemblies</div>
<div class="t" style="left:588px;top:216.75px;font-size:6.08px;color:#1c1c1c;font-weight:normal;transform:scaleX(0.855);transform-origin:0 0;width:82px;overflow:hidden;">solidworks_assembly</div>
<div style="position:absolute;left:190px;top:224.5px;width:6px;height:7px;background:linear-gradient(135deg,#fbf4d8,#e0cf98);border:0.8px solid #8a7a48;border-radius:0 1.5px 0 0;"></div>
<div class="t" style="left:220px;top:225.30px;font-size:6.08px;color:#1c1c1c;font-weight:normal;transform:scaleX(0.855);transform-origin:0 0;width:95px;overflow:hidden;">3DCATIA5_FRONTDRIVEASSEMBLY</div>
<div class="t" style="left:304px;top:225.30px;font-size:6.08px;color:#1c1c1c;font-weight:normal;transform:scaleX(0.855);transform-origin:0 0;">A v1</div>
<div class="t" style="left:329px;top:225.30px;font-size:6.08px;color:#2a2a2a;font-weight:bold;transform:scaleX(0.855);transform-origin:0 0;">Released</div>
<div class="t" style="left:369px;top:225.30px;font-size:6.08px;color:#1c1c1c;font-weight:normal;transform:scaleX(0.855);transform-origin:0 0;width:190px;overflow:hidden;">CATIA5 FRONT DRIVE ASSEMBLY</div>
<div class="t" style="left:536px;top:225.30px;font-size:6.08px;color:#2a2a2a;font-weight:normal;transform:scaleX(0.855);transform-origin:0 0;">Assemblies</div>
<div class="t" style="left:588px;top:225.30px;font-size:6.08px;color:#1c1c1c;font-weight:normal;transform:scaleX(0.855);transform-origin:0 0;width:82px;overflow:hidden;">catia_assembly</div>
<div style="position:absolute;left:190px;top:233.05px;width:6px;height:7px;background:linear-gradient(135deg,#fbf4d8,#e0cf98);border:0.8px solid #8a7a48;border-radius:0 1.5px 0 0;"></div>
<div class="t" style="left:220px;top:233.85px;font-size:6.08px;color:#1c1c1c;font-weight:normal;transform:scaleX(0.855);transform-origin:0 0;width:95px;overflow:hidden;">3DUGASSEMBLY+VALVE.PRT</div>
<div class="t" style="left:304px;top:233.85px;font-size:6.08px;color:#1c1c1c;font-weight:normal;transform:scaleX(0.855);transform-origin:0 0;">A v1</div>
<div class="t" style="left:329px;top:233.85px;font-size:6.08px;color:#2a2a2a;font-weight:normal;transform:scaleX(0.855);transform-origin:0 0;">In Progress</div>
<div class="t" style="left:369px;top:233.85px;font-size:6.08px;color:#1c1c1c;font-weight:normal;transform:scaleX(0.855);transform-origin:0 0;width:190px;overflow:hidden;">Valve Assembly - UG</div>
<div class="t" style="left:536px;top:233.85px;font-size:6.08px;color:#2a2a2a;font-weight:normal;transform:scaleX(0.855);transform-origin:0 0;">Assemblies</div>
<div class="t" style="left:588px;top:233.85px;font-size:6.08px;color:#1c1c1c;font-weight:normal;transform:scaleX(0.855);transform-origin:0 0;width:82px;overflow:hidden;">ug_assembly</div>
<div style="position:absolute;left:190px;top:241.60000000000002px;width:6px;height:7px;background:linear-gradient(135deg,#fbf4d8,#e0cf98);border:0.8px solid #8a7a48;border-radius:0 1.5px 0 0;"></div>
<div class="t" style="left:220px;top:242.40px;font-size:6.08px;color:#1c1c1c;font-weight:normal;transform:scaleX(0.855);transform-origin:0 0;width:95px;overflow:hidden;">425a.asm</div>
<div class="t" style="left:304px;top:242.40px;font-size:6.08px;color:#1c1c1c;font-weight:normal;transform:scaleX(0.855);transform-origin:0 0;">B v1</div>
<div class="t" style="left:329px;top:242.40px;font-size:6.08px;color:#2a2a2a;font-weight:normal;transform:scaleX(0.855);transform-origin:0 0;">In Progress</div>
<div class="t" style="left:369px;top:242.40px;font-size:6.08px;color:#1c1c1c;font-weight:normal;transform:scaleX(0.855);transform-origin:0 0;width:190px;overflow:hidden;">ASSY, SUB, MOUSE, TOP</div>
<div class="t" style="left:536px;top:242.40px;font-size:6.08px;color:#2a2a2a;font-weight:normal;transform:scaleX(0.855);transform-origin:0 0;">Assemblies</div>
<div class="t" style="left:588px;top:242.40px;font-size:6.08px;color:#1c1c1c;font-weight:normal;transform:scaleX(0.855);transform-origin:0 0;width:82px;overflow:hidden;">proengineer_assembl</div>
<div style="position:absolute;left:190px;top:250.15px;width:6px;height:7px;background:linear-gradient(135deg,#fbf4d8,#e0cf98);border:0.8px solid #8a7a48;border-radius:0 1.5px 0 0;"></div>
<div class="t" style="left:220px;top:250.95px;font-size:6.08px;color:#1c1c1c;font-weight:normal;transform:scaleX(0.855);transform-origin:0 0;width:95px;overflow:hidden;">426a.asm</div>
<div class="t" style="left:304px;top:250.95px;font-size:6.08px;color:#1c1c1c;font-weight:normal;transform:scaleX(0.855);transform-origin:0 0;">B v1</div>
<div class="t" style="left:329px;top:250.95px;font-size:6.08px;color:#2a2a2a;font-weight:bold;transform:scaleX(0.855);transform-origin:0 0;">Released</div>
<div class="t" style="left:369px;top:250.95px;font-size:6.08px;color:#1c1c1c;font-weight:normal;transform:scaleX(0.855);transform-origin:0 0;width:190px;overflow:hidden;">ASSY, OUT, MOUSE, BA</div>
<div class="t" style="left:536px;top:250.95px;font-size:6.08px;color:#2a2a2a;font-weight:normal;transform:scaleX(0.855);transform-origin:0 0;">Assemblies</div>
<div class="t" style="left:588px;top:250.95px;font-size:6.08px;color:#1c1c1c;font-weight:normal;transform:scaleX(0.855);transform-origin:0 0;width:82px;overflow:hidden;">proengineer_assembl</div>
<div style="position:absolute;left:181px;top:259.20000000000005px;width:3.4px;height:3px;border:0.8px solid #6a6050;border-bottom:none;border-radius:1.5px 1.5px 0 0;"></div>
<div style="position:absolute;left:180.5px;top:261.40000000000003px;width:4.4px;height:3.5px;background:#9a8e70;border:0.5px solid #5a5040;"></div>
<div style="position:absolute;left:190px;top:258.70000000000005px;width:6px;height:7px;background:linear-gradient(135deg,#fbf4d8,#e0cf98);border:0.8px solid #8a7a48;border-radius:0 1.5px 0 0;"></div>
<div class="t" style="left:220px;top:259.50px;font-size:6.08px;color:#1c1c1c;font-weight:normal;transform:scaleX(0.855);transform-origin:0 0;width:95px;overflow:hidden;">44-004.SLDASM</div>
<div class="t" style="left:304px;top:259.50px;font-size:6.08px;color:#1c1c1c;font-weight:normal;transform:scaleX(0.855);transform-origin:0 0;">B v1</div>
<div class="t" style="left:329px;top:259.50px;font-size:6.08px;color:#2a2a2a;font-weight:normal;transform:scaleX(0.855);transform-origin:0 0;">In Progress</div>
<div class="t" style="left:369px;top:259.50px;font-size:6.08px;color:#1c1c1c;font-weight:normal;transform:scaleX(0.855);transform-origin:0 0;width:190px;overflow:hidden;">None</div>
<div class="t" style="left:536px;top:259.50px;font-size:6.08px;color:#2a2a2a;font-weight:normal;transform:scaleX(0.855);transform-origin:0 0;">Assemblies</div>
<div class="t" style="left:588px;top:259.50px;font-size:6.08px;color:#1c1c1c;font-weight:normal;transform:scaleX(0.855);transform-origin:0 0;width:82px;overflow:hidden;">solidworks_assembly</div>
<div style="position:absolute;left:190px;top:267.25px;width:6px;height:7px;background:linear-gradient(135deg,#fbf4d8,#e0cf98);border:0.8px solid #8a7a48;border-radius:0 1.5px 0 0;"></div>
<div class="t" style="left:220px;top:268.05px;font-size:6.08px;color:#1c1c1c;font-weight:normal;transform:scaleX(0.855);transform-origin:0 0;width:95px;overflow:hidden;">468a.asm</div>
<div class="t" style="left:304px;top:268.05px;font-size:6.08px;color:#1c1c1c;font-weight:normal;transform:scaleX(0.855);transform-origin:0 0;">C v1</div>
<div class="t" style="left:329px;top:268.05px;font-size:6.08px;color:#2a2a2a;font-weight:bold;transform:scaleX(0.855);transform-origin:0 0;">Released</div>
<div class="t" style="left:369px;top:268.05px;font-size:6.08px;color:#1c1c1c;font-weight:normal;transform:scaleX(0.855);transform-origin:0 0;width:190px;overflow:hidden;">ASSY, HOLDER, MOUSE</div>
<div class="t" style="left:536px;top:268.05px;font-size:6.08px;color:#2a2a2a;font-weight:normal;transform:scaleX(0.855);transform-origin:0 0;">Assemblies</div>
<div class="t" style="left:588px;top:268.05px;font-size:6.08px;color:#1c1c1c;font-weight:normal;transform:scaleX(0.855);transform-origin:0 0;width:82px;overflow:hidden;">proengineer_assembl</div>
<div style="position:absolute;left:677px;top:53px;width:11px;height:224px;background:#eeeeee;border-left:1px solid #d8d8d8;"></div>
<div style="position:absolute;left:678px;top:79px;width:8px;height:130px;background:#e2e2e2;border:1px solid #bdbdbd;"></div>
<div class="t s" style="left:680px;top:47px;font-size:4.5px;color:#3a3a3a;font-weight:normal;">▾</div>
<div style="position:absolute;left:179px;top:277px;width:509px;height:7px;background:#ececec;border-top:1px solid #d0d0d0;"></div>
<div style="position:absolute;left:188px;top:278px;width:470px;height:5px;background:#dedede;border:1px solid #c4c4c4;"></div>
<div style="position:absolute;left:92px;top:284px;width:596px;height:4px;background:#ebebeb;"></div>
<div style="position:absolute;left:92px;top:288px;width:596px;height:12px;background:#f3f3f1;"></div>
<div style="position:absolute;left:92px;top:299px;width:596px;height:2.5px;background:linear-gradient(#8c8a86,#6e6c68);"></div>
<div class="t" style="left:95px;top:291.40px;font-size:5.85px;color:#3a3a3a;font-weight:normal;transform:scaleX(0.855);transform-origin:0 0;">◂</div>
<svg style="position:absolute;left:0;top:0" width="300" height="302" viewBox="0 0 300 302"><path d="M101,300 L107,288.5 H159.5 V300z" fill="#fbfbf8" stroke="#d4d3cd" stroke-width="0.6"/><path d="M159.5,300 V289 H218.5 V300" fill="#f1f1ee" stroke="#cfcec8" stroke-width="0.6"/></svg>
<div class="t" style="left:122.5px;top:290.90px;font-size:6.32px;color:#111;font-weight:bold;transform:scaleX(0.855);transform-origin:0 0;">My Work List</div>
<div style="position:absolute;left:111px;top:290.3px;width:8px;height:7px;background:radial-gradient(circle at 40% 35%,#f0e6a0,#b89a30 70%,#6a5a20);border-radius:50%;"></div>
<div class="t" style="left:175px;top:291.40px;font-size:6.32px;color:#2a2a2a;font-weight:normal;transform:scaleX(0.855);transform-origin:0 0;">Claimable Work</div>
<div style="position:absolute;left:164px;top:290px;width:6px;height:7.5px;background:linear-gradient(135deg,#f4ead0,#c8b070);border:0.8px solid #6a5a30;border-radius:1px;"></div>
<div style="position:absolute;left:166.5px;top:294px;width:4.5px;height:4.5px;background:#e8e0c0;border:0.8px solid #555;border-radius:50%;"></div>
<div style="position:absolute;left:218px;top:288px;width:1px;height:12px;background:#c9c8c2;"></div>
<div style="position:absolute;left:92px;top:301px;width:596px;height:135px;background:#fff;border-left:1px solid #8a8a8a;"></div>
<div style="position:absolute;left:93px;top:301px;width:595px;height:9px;background:#efedeb;border-bottom:1px solid #d6d3cf;"></div>
<div class="t" style="left:146px;top:304.50px;font-size:5.85px;color:#2a2a2a;font-weight:normal;transform:scaleX(0.855);transform-origin:0 0;">Activity</div>
<div class="t" style="left:201px;top:304.50px;font-size:5.85px;color:#2a2a2a;font-weight:bold;transform:scaleX(0.855);transform-origin:0 0;width:52px;overflow:hidden;">Assignment Status</div>
<div class="t" style="left:258px;top:304.50px;font-size:5.85px;color:#2a2a2a;font-weight:bold;transform:scaleX(0.855);transform-origin:0 0;">Assigned To</div>
<div class="t" style="left:311px;top:304.50px;font-size:5.85px;color:#2a2a2a;font-weight:normal;transform:scaleX(0.855);transform-origin:0 0;">Received</div>
<div class="t" style="left:354px;top:304.50px;font-size:5.85px;color:#2a2a2a;font-weight:normal;transform:scaleX(0.855);transform-origin:0 0;">Expected Completion</div>
<div class="t" style="left:413px;top:304.50px;font-size:5.85px;color:#2a2a2a;font-weight:normal;transform:scaleX(0.855);transform-origin:0 0;">Suspended/Hold By</div>
<div class="t" style="left:512px;top:304.50px;font-size:5.85px;color:#2a2a2a;font-weight:normal;transform:scaleX(0.855);transform-origin:0 0;">Attachment</div>
<div style="position:absolute;left:113px;top:302px;width:1px;height:8px;background:#d0cdc8;"></div>
<div style="position:absolute;left:197px;top:302px;width:1px;height:8px;background:#d0cdc8;"></div>
<div style="position:absolute;left:246px;top:302px;width:1px;height:8px;background:#d0cdc8;"></div>
<div style="position:absolute;left:296px;top:302px;width:1px;height:8px;background:#d0cdc8;"></div>
<div style="position:absolute;left:346px;top:302px;width:1px;height:8px;background:#d0cdc8;"></div>
<div style="position:absolute;left:406px;top:302px;width:1px;height:8px;background:#d0cdc8;"></div>
<div style="position:absolute;left:459px;top:302px;width:1px;height:8px;background:#d0cdc8;"></div>
<div style="position:absolute;left:487px;top:302px;width:1px;height:8px;background:#d0cdc8;"></div>
<div style="position:absolute;left:101px;top:312px;width:5.5px;height:6px;background:linear-gradient(135deg,#efe2b0,#c8b070);border:0.8px solid #8a7a48;border-radius:1px 1px 0 0;"></div>
<div class="t" style="left:114.5px;top:312.30px;font-size:6.08px;color:#1c1c1c;font-weight:normal;transform:scaleX(0.855);transform-origin:0 0;">Mechanical Redesign</div>
<div class="t" style="left:198.5px;top:312.30px;font-size:6.08px;color:#1c1c1c;font-weight:normal;transform:scaleX(0.855);transform-origin:0 0;">Claimed</div>
<div class="t" style="left:248px;top:312.30px;font-size:6.08px;color:#111;font-weight:normal;transform:scaleX(0.855);transform-origin:0 0;">CMS DBA</div>
<div class="t" style="left:298px;top:312.30px;font-size:6.08px;color:#1c1c1c;font-weight:normal;transform:scaleX(0.855);transform-origin:0 0;">28-DEC-2009</div>
<div class="t" style="left:348px;top:312.30px;font-size:6.08px;color:#1c1c1c;font-weight:normal;transform:scaleX(0.855);transform-origin:0 0;">29-JAN-2010</div>
<div style="position:absolute;left:467px;top:311.7px;width:7px;height:6.6px;background:linear-gradient(90deg,#8a7418 0,#d8c048 35%,#c8a830 100%);border:0.8px solid #6a5a18;border-radius:1px;"></div>
<div class="t" style="left:489.8px;top:312.30px;font-size:6.08px;color:#111;font-weight:normal;transform:scaleX(0.855);transform-origin:0 0;">HD-DVR  Product Launch</div>
<div style="position:absolute;left:101px;top:320.6px;width:5.5px;height:6px;background:linear-gradient(135deg,#efe2b0,#c8b070);border:0.8px solid #8a7a48;border-radius:1px 1px 0 0;"></div>
<div class="t" style="left:114.5px;top:320.90px;font-size:6.08px;color:#1c1c1c;font-weight:normal;transform:scaleX(0.855);transform-origin:0 0;">CM Review</div>
<div class="t" style="left:198.5px;top:320.90px;font-size:6.08px;color:#1c1c1c;font-weight:normal;transform:scaleX(0.855);transform-origin:0 0;">Claimed</div>
<div class="t" style="left:248px;top:320.90px;font-size:6.08px;color:#111;font-weight:normal;transform:scaleX(0.855);transform-origin:0 0;">CMS DBA</div>
<div class="t" style="left:298px;top:320.90px;font-size:6.08px;color:#1c1c1c;font-weight:normal;transform:scaleX(0.855);transform-origin:0 0;">08-JAN-2010</div>
<div class="t" style="left:348px;top:320.90px;font-size:6.08px;color:#1c1c1c;font-weight:normal;transform:scaleX(0.855);transform-origin:0 0;">29-JAN-2010</div>
<div style="position:absolute;left:467px;top:320.3px;width:7px;height:6.6px;background:linear-gradient(90deg,#8a7418 0,#d8c048 35%,#c8a830 100%);border:0.8px solid #6a5a18;border-radius:1px;"></div>
<div class="t" style="left:489.8px;top:320.90px;font-size:6.08px;color:#111;font-weight:normal;transform:scaleX(0.855);transform-origin:0 0;">ECO #32</div>
<div style="position:absolute;left:101px;top:337.6px;width:5.5px;height:6px;background:linear-gradient(135deg,#efe2b0,#c8b070);border:0.8px solid #8a7a48;border-radius:1px 1px 0 0;"></div>
<div class="t" style="left:114.5px;top:337.90px;font-size:6.08px;color:#1c1c1c;font-weight:normal;transform:scaleX(0.855);transform-origin:0 0;">Assign call</div>
<div class="t" style="left:198.5px;top:337.90px;font-size:6.08px;color:#1c1c1c;font-weight:normal;transform:scaleX(0.855);transform-origin:0 0;">Claimed</div>
<div class="t" style="left:248px;top:337.90px;font-size:6.08px;color:#111;font-weight:normal;transform:scaleX(0.855);transform-origin:0 0;">CMS DBA (Prepar</div>
<div class="t" style="left:298px;top:337.90px;font-size:6.08px;color:#1c1c1c;font-weight:normal;transform:scaleX(0.855);transform-origin:0 0;">08-JAN-2010</div>
<div class="t" style="left:348px;top:337.90px;font-size:6.08px;color:#1c1c1c;font-weight:normal;transform:scaleX(0.855);transform-origin:0 0;">29-JAN-2010</div>
<div style="position:absolute;left:467px;top:337.3px;width:7px;height:6.6px;background:linear-gradient(90deg,#8a7418 0,#d8c048 35%,#c8a830 100%);border:0.8px solid #6a5a18;border-radius:1px;"></div>
<div class="t" style="left:489.8px;top:337.90px;font-size:6.08px;color:#111;font-weight:normal;transform:scaleX(0.855);transform-origin:0 0;">Tech Support #100</div>
<div style="position:absolute;left:101px;top:346.1px;width:5.5px;height:6px;background:linear-gradient(135deg,#efe2b0,#c8b070);border:0.8px solid #8a7a48;border-radius:1px 1px 0 0;"></div>
<div class="t" style="left:114.5px;top:346.40px;font-size:6.08px;color:#1c1c1c;font-weight:normal;transform:scaleX(0.855);transform-origin:0 0;">Assign call</div>
<div class="t" style="left:198.5px;top:346.40px;font-size:6.08px;color:#1c1c1c;font-weight:normal;transform:scaleX(0.855);transform-origin:0 0;">Claimed</div>
<div class="t" style="left:248px;top:346.40px;font-size:6.08px;color:#111;font-weight:normal;transform:scaleX(0.855);transform-origin:0 0;">CMS DBA (Prepar</div>
<div class="t" style="left:298px;top:346.40px;font-size:6.08px;color:#1c1c1c;font-weight:normal;transform:scaleX(0.855);transform-origin:0 0;">08-JAN-2010</div>
<div class="t" style="left:348px;top:346.40px;font-size:6.08px;color:#1c1c1c;font-weight:normal;transform:scaleX(0.855);transform-origin:0 0;">29-JAN-2010</div>
<div style="position:absolute;left:467px;top:345.8px;width:7px;height:6.6px;background:linear-gradient(90deg,#8a7418 0,#d8c048 35%,#c8a830 100%);border:0.8px solid #6a5a18;border-radius:1px;"></div>
<div class="t" style="left:489.8px;top:346.40px;font-size:6.08px;color:#111;font-weight:normal;transform:scaleX(0.855);transform-origin:0 0;">Tech Support #101</div>
<div style="position:absolute;left:101px;top:354.7px;width:5.5px;height:6px;background:linear-gradient(135deg,#efe2b0,#c8b070);border:0.8px solid #8a7a48;border-radius:1px 1px 0 0;"></div>
<div class="t" style="left:114.5px;top:355.00px;font-size:6.08px;color:#1c1c1c;font-weight:normal;transform:scaleX(0.855);transform-origin:0 0;">Go/No Go Review</div>
<div class="t" style="left:198.5px;top:355.00px;font-size:6.08px;color:#1c1c1c;font-weight:normal;transform:scaleX(0.855);transform-origin:0 0;">Claimed</div>
<div class="t" style="left:248px;top:355.00px;font-size:6.08px;color:#111;font-weight:normal;transform:scaleX(0.855);transform-origin:0 0;">CMS DBA</div>
<div class="t" style="left:298px;top:355.00px;font-size:6.08px;color:#1c1c1c;font-weight:normal;transform:scaleX(0.855);transform-origin:0 0;">30-DEC-2009</div>
<div class="t" style="left:348px;top:355.00px;font-size:6.08px;color:#1c1c1c;font-weight:normal;transform:scaleX(0.855);transform-origin:0 0;">31-JAN-2010</div>
<div style="position:absolute;left:467px;top:354.4px;width:7px;height:6.6px;background:linear-gradient(90deg,#8a7418 0,#d8c048 35%,#c8a830 100%);border:0.8px solid #6a5a18;border-radius:1px;"></div>
<div class="t" style="left:489.8px;top:355.00px;font-size:6.08px;color:#111;font-weight:normal;transform:scaleX(0.855);transform-origin:0 0;">HD-DVR  Product Launch</div>
<div style="position:absolute;left:101px;top:363.3px;width:5.5px;height:6px;background:linear-gradient(135deg,#efe2b0,#c8b070);border:0.8px solid #8a7a48;border-radius:1px 1px 0 0;"></div>
<div class="t" style="left:114.5px;top:363.60px;font-size:6.08px;color:#1c1c1c;font-weight:normal;transform:scaleX(0.855);transform-origin:0 0;">Engineering Review</div>
<div class="t" style="left:198.5px;top:363.60px;font-size:6.08px;color:#1c1c1c;font-weight:normal;transform:scaleX(0.855);transform-origin:0 0;">Claimed</div>
<div class="t" style="left:248px;top:363.60px;font-size:6.08px;color:#111;font-weight:normal;transform:scaleX(0.855);transform-origin:0 0;">CMS DBA</div>
<div class="t" style="left:298px;top:363.60px;font-size:6.08px;color:#1c1c1c;font-weight:normal;transform:scaleX(0.855);transform-origin:0 0;">04-JAN-2010</div>
<div class="t" style="left:348px;top:363.60px;font-size:6.08px;color:#1c1c1c;font-weight:normal;transform:scaleX(0.855);transform-origin:0 0;">29-JAN-2010</div>
<div style="position:absolute;left:467px;top:363.0px;width:7px;height:6.6px;background:linear-gradient(90deg,#8a7418 0,#d8c048 35%,#c8a830 100%);border:0.8px solid #6a5a18;border-radius:1px;"></div>
<div class="t" style="left:489.8px;top:363.60px;font-size:6.08px;color:#111;font-weight:normal;transform:scaleX(0.855);transform-origin:0 0;">HD-DVR  Product Launch</div>
<div class="t s" style="left:467.5px;top:329.5px;font-size:4.5px;color:#111;font-weight:bold;">%</div>
<div style="position:absolute;left:481px;top:328.3px;width:5.8px;height:7px;background:linear-gradient(135deg,#f4ead0,#c8b888);border:0.8px solid #7a6a48;"></div>
<div style="position:absolute;left:461.5px;top:363.5px;width:4px;height:5.5px;background:#3a3a38;border-radius:1.5px 1.5px 0 0;"></div>
<div class="t" style="left:495px;top:329.30px;font-size:6.08px;color:#3a3a3a;font-weight:normal;transform:scaleX(0.855);transform-origin:0 0;">110-101.pdf</div>
<div style="position:absolute;left:93px;top:425px;width:595px;height:7px;background:#ececec;border-top:1px solid #d0d0d0;"></div>
<div style="position:absolute;left:102px;top:426px;width:486px;height:5px;background:#dedede;border:1px solid #c4c4c4;"></div>
<div style="position:absolute;left:92px;top:434px;width:596px;height:10px;background:#f0efec;border-top:1px solid #d5d5d5;"></div>
<div class="t" style="left:92.5px;top:437.70px;font-size:5.97px;color:#1c1c1c;font-weight:normal;transform:scaleX(0.855);transform-origin:0 0;">For Help, press F1</div>
<div style="position:absolute;left:93px;top:44px;width:74px;height:233px;overflow:hidden;">
<div style="position:absolute;left:7.400000000000006px;top:7px;width:1px;height:229px;background:#9a9a9a;"></div>
<div style="position:absolute;left:16.900000000000006px;top:14px;width:1px;height:65px;background:#9a9a9a;"></div>
<div style="position:absolute;left:16.900000000000006px;top:97px;width:1px;height:139px;background:#9a9a9a;"></div>
<div style="position:absolute;left:26.400000000000006px;top:120px;width:1px;height:116px;background:#9a9a9a;"></div>
<div style="position:absolute;left:35.900000000000006px;top:151px;width:1px;height:65px;background:#9a9a9a;"></div>
<svg style="position:absolute;left:2.0px;top:0.5px" width="9" height="7" viewBox="0 0 9 7"><path d="M0.5,1 h3 l1,1 h3 v1.5 h-6.5z" fill="#bfb57a" stroke="#7a7048" stroke-width="0.6"/><path d="M0.5,6.5 l1.5,-3.5 h6.8 l-1.5,3.5z" fill="#ddd39a" stroke="#7a7048" stroke-width="0.6"/></svg>
<div class="t" style="left:12.0px;top:0.60px;font-size:6.2px;color:#1c1c1c;transform:scaleX(0.855);transform-origin:0 0">CMS</div>
<div style="position:absolute;left:7.400000000000006px;top:11.07px;width:6px;height:1px;background:#9a9a9a;"></div>
<svg style="position:absolute;left:11.5px;top:8.07px" width="9" height="7" viewBox="0 0 9 7"><path d="M0.5,1 h3 l1,1 h3 v1.5 h-6.5z" fill="#bfb57a" stroke="#7a7048" stroke-width="0.6"/><path d="M0.5,6.5 l1.5,-3.5 h6.8 l-1.5,3.5z" fill="#ddd39a" stroke="#7a7048" stroke-width="0.6"/></svg>
<div class="t" style="left:21.5px;top:8.17px;font-size:6.2px;color:#1c1c1c;transform:scaleX(0.855);transform-origin:0 0">Change Items</div>
<div style="position:absolute;left:16.900000000000006px;top:18.64px;width:6px;height:1px;background:#9a9a9a;"></div>
<svg style="position:absolute;left:21.0px;top:15.64px" width="9" height="7" viewBox="0 0 9 7"><path d="M0.5,1.5 h3 l1,-1 h3.5 v6 h-7.5z" fill="#c8aa30" stroke="#6f5e1a" stroke-width="0.6"/><path d="M0.5,3 h8" stroke="#f0e090" stroke-width="0.6"/></svg>
<div class="t" style="left:31.0px;top:15.74px;font-size:6.2px;color:#1c1c1c;transform:scaleX(0.855);transform-origin:0 0">Change Action</div>
<div style="position:absolute;left:16.900000000000006px;top:26.210000000000008px;width:6px;height:1px;background:#9a9a9a;"></div>
<svg style="position:absolute;left:21.0px;top:23.210000000000008px" width="9" height="7" viewBox="0 0 9 7"><path d="M0.5,1.5 h3 l1,-1 h3.5 v6 h-7.5z" fill="#c8aa30" stroke="#6f5e1a" stroke-width="0.6"/><path d="M0.5,3 h8" stroke="#f0e090" stroke-width="0.6"/></svg>
<div class="t" style="left:31.0px;top:23.31px;font-size:6.2px;color:#1c1c1c;transform:scaleX(0.855);transform-origin:0 0">Change Order</div>
<div style="position:absolute;left:16.900000000000006px;top:33.78px;width:6px;height:1px;background:#9a9a9a;"></div>
<svg style="position:absolute;left:21.0px;top:30.78px" width="9" height="7" viewBox="0 0 9 7"><path d="M0.5,1.5 h3 l1,-1 h3.5 v6 h-7.5z" fill="#c8aa30" stroke="#6f5e1a" stroke-width="0.6"/><path d="M0.5,3 h8" stroke="#f0e090" stroke-width="0.6"/></svg>
<div class="t" style="left:31.0px;top:30.88px;font-size:6.2px;color:#1c1c1c;transform:scaleX(0.855);transform-origin:0 0">Change Request</div>
<div style="position:absolute;left:16.900000000000006px;top:41.349999999999994px;width:6px;height:1px;background:#9a9a9a;"></div>
<svg style="position:absolute;left:21.0px;top:38.349999999999994px" width="9" height="7" viewBox="0 0 9 7"><path d="M0.5,1.5 h3 l1,-1 h3.5 v6 h-7.5z" fill="#c8aa30" stroke="#6f5e1a" stroke-width="0.6"/><path d="M0.5,3 h8" stroke="#f0e090" stroke-width="0.6"/></svg>
<div class="t" style="left:31.0px;top:38.45px;font-size:6.2px;color:#1c1c1c;transform:scaleX(0.855);transform-origin:0 0">DC</div>
<div style="position:absolute;left:16.900000000000006px;top:48.92px;width:6px;height:1px;background:#9a9a9a;"></div>
<svg style="position:absolute;left:21.0px;top:45.92px" width="9" height="7" viewBox="0 0 9 7"><path d="M0.5,1.5 h3 l1,-1 h3.5 v6 h-7.5z" fill="#c8aa30" stroke="#6f5e1a" stroke-width="0.6"/><path d="M0.5,3 h8" stroke="#f0e090" stroke-width="0.6"/></svg>
<div class="t" style="left:31.0px;top:46.02px;font-size:6.2px;color:#1c1c1c;transform:scaleX(0.855);transform-origin:0 0">ECO</div>
<div style="position:absolute;left:16.900000000000006px;top:56.49000000000001px;width:6px;height:1px;background:#9a9a9a;"></div>
<svg style="position:absolute;left:21.0px;top:53.49000000000001px" width="9" height="7" viewBox="0 0 9 7"><path d="M0.5,1.5 h3 l1,-1 h3.5 v6 h-7.5z" fill="#c8aa30" stroke="#6f5e1a" stroke-width="0.6"/><path d="M0.5,3 h8" stroke="#f0e090" stroke-width="0.6"/></svg>
<div class="t" style="left:31.0px;top:53.59px;font-size:6.2px;color:#1c1c1c;transform:scaleX(0.855);transform-origin:0 0">Engineering Change</div>
<div style="position:absolute;left:16.900000000000006px;top:64.06px;width:6px;height:1px;background:#9a9a9a;"></div>
<svg style="position:absolute;left:21.0px;top:61.06px" width="9" height="7" viewBox="0 0 9 7"><path d="M0.5,1.5 h3 l1,-1 h3.5 v6 h-7.5z" fill="#c8aa30" stroke="#6f5e1a" stroke-width="0.6"/><path d="M0.5,3 h8" stroke="#f0e090" stroke-width="0.6"/></svg>
<div class="t" style="left:31.0px;top:61.16px;font-size:6.2px;color:#1c1c1c;transform:scaleX(0.855);transform-origin:0 0">HT Parts Quoting</div>
<div style="position:absolute;left:16.900000000000006px;top:71.63px;width:6px;height:1px;background:#9a9a9a;"></div>
<svg style="position:absolute;left:21.0px;top:68.63px" width="9" height="7" viewBox="0 0 9 7"><path d="M0.5,1.5 h3 l1,-1 h3.5 v6 h-7.5z" fill="#c8aa30" stroke="#6f5e1a" stroke-width="0.6"/><path d="M0.5,3 h8" stroke="#f0e090" stroke-width="0.6"/></svg>
<div class="t" style="left:31.0px;top:68.73px;font-size:6.2px;color:#1c1c1c;transform:scaleX(0.855);transform-origin:0 0">NCR</div>
<div style="position:absolute;left:16.900000000000006px;top:79.2px;width:6px;height:1px;background:#9a9a9a;"></div>
<svg style="position:absolute;left:21.0px;top:76.2px" width="9" height="7" viewBox="0 0 9 7"><path d="M0.5,1.5 h3 l1,-1 h3.5 v6 h-7.5z" fill="#c8aa30" stroke="#6f5e1a" stroke-width="0.6"/><path d="M0.5,3 h8" stroke="#f0e090" stroke-width="0.6"/></svg>
<div class="t" style="left:31.0px;top:76.30px;font-size:6.2px;color:#1c1c1c;transform:scaleX(0.855);transform-origin:0 0">NPI</div>
<div style="position:absolute;left:7.400000000000006px;top:86.77000000000001px;width:6px;height:1px;background:#9a9a9a;"></div>
<svg style="position:absolute;left:11.5px;top:83.77000000000001px" width="9" height="7" viewBox="0 0 9 7"><path d="M0.5,1.5 h3 l1,-1 h3.5 v6 h-7.5z" fill="#f2e6a0" stroke="#9a8c48" stroke-width="0.6"/></svg>
<div class="t" style="left:21.5px;top:83.87px;font-size:6.2px;color:#1c1c1c;transform:scaleX(0.855);transform-origin:0 0">Companies</div>
<div style="position:absolute;left:7.400000000000006px;top:94.34px;width:6px;height:1px;background:#9a9a9a;"></div>
<svg style="position:absolute;left:11.5px;top:91.34px" width="9" height="7" viewBox="0 0 9 7"><path d="M0.5,1 h3 l1,1 h3 v1.5 h-6.5z" fill="#bfb57a" stroke="#7a7048" stroke-width="0.6"/><path d="M0.5,6.5 l1.5,-3.5 h6.8 l-1.5,3.5z" fill="#ddd39a" stroke="#7a7048" stroke-width="0.6"/></svg>
<div class="t" style="left:21.5px;top:91.44px;font-size:6.2px;color:#1c1c1c;transform:scaleX(0.855);transform-origin:0 0">Files</div>
<div style="position:absolute;left:16.900000000000006px;top:101.91px;width:6px;height:1px;background:#9a9a9a;"></div>
<svg style="position:absolute;left:21.0px;top:98.91px" width="9" height="7" viewBox="0 0 9 7"><path d="M0.5,1.5 h3 l1,-1 h3.5 v6 h-7.5z" fill="#f2e6a0" stroke="#9a8c48" stroke-width="0.6"/></svg>
<div class="t" style="left:31.0px;top:99.01px;font-size:6.2px;color:#1c1c1c;transform:scaleX(0.855);transform-origin:0 0">Customer</div>
<div style="position:absolute;left:16.900000000000006px;top:109.48000000000002px;width:6px;height:1px;background:#9a9a9a;"></div>
<svg style="position:absolute;left:22.5px;top:106.18000000000002px" width="7" height="7.5" viewBox="0 0 7 7.5"><path d="M0.5,0.5 h4 l2,2 v4.5 h-6z" fill="#efe2b8" stroke="#8a7a48" stroke-width="0.6"/><path d="M4.5,0.5 v2 h2" fill="none" stroke="#8a7a48" stroke-width="0.5"/></svg>
<div class="t" style="left:31.0px;top:106.58px;font-size:6.2px;color:#1c1c1c;transform:scaleX(0.855);transform-origin:0 0">Email</div>
<div style="position:absolute;left:16.900000000000006px;top:117.05000000000001px;width:6px;height:1px;background:#9a9a9a;"></div>
<svg style="position:absolute;left:21.0px;top:114.05000000000001px" width="9" height="7" viewBox="0 0 9 7"><path d="M0.5,1 h3 l1,1 h3 v1.5 h-6.5z" fill="#bfb57a" stroke="#7a7048" stroke-width="0.6"/><path d="M0.5,6.5 l1.5,-3.5 h6.8 l-1.5,3.5z" fill="#ddd39a" stroke="#7a7048" stroke-width="0.6"/></svg>
<div class="t" style="left:31.0px;top:114.15px;font-size:6.2px;color:#1c1c1c;transform:scaleX(0.855);transform-origin:0 0">Engineering</div>
<div style="position:absolute;left:26.400000000000006px;top:124.62px;width:6px;height:1px;background:#9a9a9a;"></div>
<svg style="position:absolute;left:32.0px;top:121.32000000000001px" width="7" height="7.5" viewBox="0 0 7 7.5"><path d="M0.5,0.5 h4 l2,2 v4.5 h-6z" fill="#efe2b8" stroke="#8a7a48" stroke-width="0.6"/><path d="M4.5,0.5 v2 h2" fill="none" stroke="#8a7a48" stroke-width="0.5"/></svg>
<div class="t" style="left:40.5px;top:121.72px;font-size:6.2px;color:#1c1c1c;transform:scaleX(0.855);transform-origin:0 0">Datasheets</div>
<div style="position:absolute;left:26.400000000000006px;top:132.19px;width:6px;height:1px;background:#9a9a9a;"></div>
<svg style="position:absolute;left:30.5px;top:129.19px" width="9" height="7" viewBox="0 0 9 7"><path d="M0.5,1.5 h3 l1,-1 h3.5 v6 h-7.5z" fill="#f2e6a0" stroke="#9a8c48" stroke-width="0.6"/></svg>
<div class="t" style="left:40.5px;top:129.29px;font-size:6.2px;color:#1c1c1c;transform:scaleX(0.855);transform-origin:0 0">Electrical</div>
<div style="position:absolute;left:26.400000000000006px;top:139.76px;width:6px;height:1px;background:#9a9a9a;"></div>
<svg style="position:absolute;left:32.0px;top:136.45999999999998px" width="7" height="7.5" viewBox="0 0 7 7.5"><path d="M0.5,0.5 h4 l2,2 v4.5 h-6z" fill="#efe2b8" stroke="#8a7a48" stroke-width="0.6"/><path d="M4.5,0.5 v2 h2" fill="none" stroke="#8a7a48" stroke-width="0.5"/></svg>
<div class="t" style="left:40.5px;top:136.86px;font-size:6.2px;color:#1c1c1c;transform:scaleX(0.855);transform-origin:0 0">Markups</div>
<div style="position:absolute;left:26.400000000000006px;top:147.33px;width:6px;height:1px;background:#9a9a9a;"></div>
<svg style="position:absolute;left:30.5px;top:144.33px" width="9" height="7" viewBox="0 0 9 7"><path d="M0.5,1 h3 l1,1 h3 v1.5 h-6.5z" fill="#bfb57a" stroke="#7a7048" stroke-width="0.6"/><path d="M0.5,6.5 l1.5,-3.5 h6.8 l-1.5,3.5z" fill="#ddd39a" stroke="#7a7048" stroke-width="0.6"/></svg>
<div class="t" style="left:40.5px;top:144.43px;font-size:6.2px;color:#1c1c1c;transform:scaleX(0.855);transform-origin:0 0">Mechanical</div>
<div style="position:absolute;left:35.900000000000006px;top:154.9px;width:6px;height:1px;background:#9a9a9a;"></div>
<svg style="position:absolute;left:41.5px;top:151.6px" width="7" height="7.5" viewBox="0 0 7 7.5"><path d="M0.5,0.5 h4 l2,2 v4.5 h-6z" fill="#efe2b8" stroke="#8a7a48" stroke-width="0.6"/><path d="M4.5,0.5 v2 h2" fill="none" stroke="#8a7a48" stroke-width="0.5"/></svg>
<div style="position:absolute;left:49.0px;top:151.4px;width:26px;height:6.5px;background:#3d8ee6;"></div>
<div class="t" style="left:50.0px;top:152.00px;font-size:6.2px;color:#fff;transform:scaleX(0.855);transform-origin:0 0">Assemblies</div>
<div style="position:absolute;left:35.900000000000006px;top:162.47px;width:6px;height:1px;background:#9a9a9a;"></div>
<svg style="position:absolute;left:41.5px;top:159.17px" width="7" height="7.5" viewBox="0 0 7 7.5"><path d="M0.5,0.5 h4 l2,2 v4.5 h-6z" fill="#efe2b8" stroke="#8a7a48" stroke-width="0.6"/><path d="M4.5,0.5 v2 h2" fill="none" stroke="#8a7a48" stroke-width="0.5"/></svg>
<div class="t" style="left:50.0px;top:159.57px;font-size:6.2px;color:#1c1c1c;transform:scaleX(0.855);transform-origin:0 0">AssyConfi</div>
<div style="position:absolute;left:35.900000000000006px;top:170.04000000000002px;width:6px;height:1px;background:#9a9a9a;"></div>
<svg style="position:absolute;left:41.5px;top:166.74px" width="7" height="7.5" viewBox="0 0 7 7.5"><path d="M0.5,0.5 h4 l2,2 v4.5 h-6z" fill="#efe2b8" stroke="#8a7a48" stroke-width="0.6"/><path d="M4.5,0.5 v2 h2" fill="none" stroke="#8a7a48" stroke-width="0.5"/></svg>
<div class="t" style="left:50.0px;top:167.14px;font-size:6.2px;color:#1c1c1c;transform:scaleX(0.855);transform-origin:0 0">Drawings</div>
<div style="position:absolute;left:35.900000000000006px;top:177.61px;width:6px;height:1px;background:#9a9a9a;"></div>
<svg style="position:absolute;left:41.5px;top:174.31px" width="7" height="7.5" viewBox="0 0 7 7.5"><path d="M0.5,0.5 h4 l2,2 v4.5 h-6z" fill="#efe2b8" stroke="#8a7a48" stroke-width="0.6"/><path d="M4.5,0.5 v2 h2" fill="none" stroke="#8a7a48" stroke-width="0.5"/></svg>
<div class="t" style="left:50.0px;top:174.71px;font-size:6.2px;color:#1c1c1c;transform:scaleX(0.855);transform-origin:0 0">IbarDrawin</div>
<div style="position:absolute;left:35.900000000000006px;top:185.18px;width:6px;height:1px;background:#9a9a9a;"></div>
<svg style="position:absolute;left:41.5px;top:181.88px" width="7" height="7.5" viewBox="0 0 7 7.5"><path d="M0.5,0.5 h4 l2,2 v4.5 h-6z" fill="#efe2b8" stroke="#8a7a48" stroke-width="0.6"/><path d="M4.5,0.5 v2 h2" fill="none" stroke="#8a7a48" stroke-width="0.5"/></svg>
<div class="t" style="left:50.0px;top:182.28px;font-size:6.2px;color:#1c1c1c;transform:scaleX(0.855);transform-origin:0 0">IbarModel</div>
<div style="position:absolute;left:35.900000000000006px;top:192.75px;width:6px;height:1px;background:#9a9a9a;"></div>
<svg style="position:absolute;left:41.5px;top:189.45px" width="7" height="7.5" viewBox="0 0 7 7.5"><path d="M0.5,0.5 h4 l2,2 v4.5 h-6z" fill="#efe2b8" stroke="#8a7a48" stroke-width="0.6"/><path d="M4.5,0.5 v2 h2" fill="none" stroke="#8a7a48" stroke-width="0.5"/></svg>
<div class="t" style="left:50.0px;top:189.85px;font-size:6.2px;color:#1c1c1c;transform:scaleX(0.855);transform-origin:0 0">IbarParts</div>
<div style="position:absolute;left:35.900000000000006px;top:200.32px;width:6px;height:1px;background:#9a9a9a;"></div>
<svg style="position:absolute;left:41.5px;top:197.01999999999998px" width="7" height="7.5" viewBox="0 0 7 7.5"><path d="M0.5,0.5 h4 l2,2 v4.5 h-6z" fill="#efe2b8" stroke="#8a7a48" stroke-width="0.6"/><path d="M4.5,0.5 v2 h2" fill="none" stroke="#8a7a48" stroke-width="0.5"/></svg>
<div class="t" style="left:50.0px;top:197.42px;font-size:6.2px;color:#1c1c1c;transform:scaleX(0.855);transform-origin:0 0">MechLib</div>
<div style="position:absolute;left:35.900000000000006px;top:207.89000000000001px;width:6px;height:1px;background:#9a9a9a;"></div>
<svg style="position:absolute;left:41.5px;top:204.59px" width="7" height="7.5" viewBox="0 0 7 7.5"><path d="M0.5,0.5 h4 l2,2 v4.5 h-6z" fill="#efe2b8" stroke="#8a7a48" stroke-width="0.6"/><path d="M4.5,0.5 v2 h2" fill="none" stroke="#8a7a48" stroke-width="0.5"/></svg>
<div class="t" style="left:50.0px;top:204.99px;font-size:6.2px;color:#1c1c1c;transform:scaleX(0.855);transform-origin:0 0">PartConfig</div>
<div style="position:absolute;left:35.900000000000006px;top:215.46000000000004px;width:6px;height:1px;background:#9a9a9a;"></div>
<svg style="position:absolute;left:41.5px;top:212.16000000000003px" width="7" height="7.5" viewBox="0 0 7 7.5"><path d="M0.5,0.5 h4 l2,2 v4.5 h-6z" fill="#efe2b8" stroke="#8a7a48" stroke-width="0.6"/><path d="M4.5,0.5 v2 h2" fill="none" stroke="#8a7a48" stroke-width="0.5"/></svg>
<div class="t" style="left:50.0px;top:212.56px;font-size:6.2px;color:#1c1c1c;transform:scaleX(0.855);transform-origin:0 0">Parts</div>
<div style="position:absolute;left:26.400000000000006px;top:223.02999999999997px;width:6px;height:1px;background:#9a9a9a;"></div>
<svg style="position:absolute;left:32.0px;top:219.72999999999996px" width="7" height="7.5" viewBox="0 0 7 7.5"><path d="M0.5,0.5 h4 l2,2 v4.5 h-6z" fill="#efe2b8" stroke="#8a7a48" stroke-width="0.6"/><path d="M4.5,0.5 v2 h2" fill="none" stroke="#8a7a48" stroke-width="0.5"/></svg>
<div class="t" style="left:40.5px;top:220.13px;font-size:6.2px;color:#1c1c1c;transform:scaleX(0.855);transform-origin:0 0">MeetingMinutes</div>
<div style="position:absolute;left:26.400000000000006px;top:230.60000000000002px;width:6px;height:1px;background:#9a9a9a;"></div>
<svg style="position:absolute;left:32.0px;top:227.3px" width="7" height="7.5" viewBox="0 0 7 7.5"><path d="M0.5,0.5 h4 l2,2 v4.5 h-6z" fill="#efe2b8" stroke="#8a7a48" stroke-width="0.6"/><path d="M4.5,0.5 v2 h2" fill="none" stroke="#8a7a48" stroke-width="0.5"/></svg>
<div class="t" style="left:40.5px;top:227.70px;font-size:6.2px;color:#1c1c1c;transform:scaleX(0.855);transform-origin:0 0">Product Specs</div>
</div>
<div style="position:absolute;left:167px;top:44px;width:8px;height:233px;background:#eeeeee;border-left:1px solid #dcdcdc;"></div>
<div style="position:absolute;left:168px;top:53px;width:6px;height:105px;background:#e0e0e0;border:1px solid #c6c6c6;"></div>
<div class="t" style="left:169px;top:45.90px;font-size:5.85px;color:#3a3a3a;font-weight:normal;transform:scaleX(0.855);transform-origin:0 0;">▴</div>
<div class="t" style="left:169px;top:267.90px;font-size:5.85px;color:#3a3a3a;font-weight:normal;transform:scaleX(0.855);transform-origin:0 0;">▾</div>
<div style="position:absolute;left:93px;top:277px;width:82px;height:7px;background:#eeeeee;border-top:1px solid #d8d8d8;"></div>
<div style="position:absolute;left:102px;top:278px;width:43px;height:5px;background:#e0e0e0;border:1px solid #c6c6c6;"></div>
<div class="t s" style="left:95px;top:278px;font-size:4.5px;color:#3a3a3a;font-weight:normal;">◂</div>
<div class="t s" style="left:161px;top:278px;font-size:4.5px;color:#3a3a3a;font-weight:normal;">▸</div>
<svg style="position:absolute;left:0;top:0" width="1000" height="40" viewBox="0 0 1000 40">
<ellipse cx="101.5" cy="25" rx="4.5" ry="2.2" fill="#c8b040"/><circle cx="100" cy="20.5" r="2" fill="#5cb070"/><circle cx="103" cy="21" r="1.8" fill="#3a8a50"/>
<circle cx="118.5" cy="22.5" r="3.6" fill="#8cc26a" stroke="#5a8a40" stroke-width="0.6"/><circle cx="118.5" cy="22.5" r="1.5" fill="#e0f0c0"/><path d="M122,21 l2.5,1.5 l-2.5,1.5z" fill="#2a3a2a"/>
<ellipse cx="132.5" cy="22.5" rx="3.8" ry="3.2" fill="#e8783a"/><ellipse cx="133" cy="22.5" rx="1.6" ry="1.3" fill="#b83a20"/><path d="M127.5,22.5 l1.5,-1 v2z" fill="#b83a20"/>
<path d="M144,26 l6,-6 l2,2 l-6,6z" fill="#a89a30"/><circle cx="147" cy="24" r="2.8" fill="#b8a838"/><circle cx="151" cy="19.5" r="1.6" fill="#5a5a7a"/>
<path d="M158,26 l5,-7" stroke="#d8c8d4" stroke-width="2.2"/>
<rect x="171" y="19" width="6" height="5" fill="#d8b848" stroke="#8a7030" stroke-width="0.5"/><rect x="174" y="21.5" width="5.5" height="5" fill="#c8a838" stroke="#8a7030" stroke-width="0.5"/>
<path d="M189,18.5 l-4,4.5 h3 l-2.5,4.5" stroke="#dcd8c0" stroke-width="1.6" fill="none"/>
<path d="M200.5,26 l6,-7" stroke="#9498a8" stroke-width="2"/><circle cx="205.5" cy="20" r="1.4" fill="#c8ccd8"/>
<circle cx="215.7" cy="22.5" r="3.2" fill="none" stroke="#c8c8d0" stroke-width="1.4"/>
<rect x="228.5" y="19" width="7" height="6.5" rx="1" fill="#7a9a40"/><rect x="230" y="20.5" width="3" height="2.5" fill="#c8d070"/><ellipse cx="232" cy="26" rx="4" ry="1" fill="#c8b040"/>
<path d="M247,20.5 a3.5,3.5 0 0 1 6,0" stroke="#2a8a90" stroke-width="1.8" fill="none"/><path d="M253,24.5 a3.5,3.5 0 0 1 -6,0" stroke="#2a7a80" stroke-width="1.8" fill="none"/>
<rect x="259" y="19.5" width="8" height="6" rx="1" fill="#a8acb8"/><rect x="260.5" y="22" width="5" height="2" fill="#606878"/>
<circle cx="278.5" cy="20" r="1.8" fill="#d0c070"/><rect x="276.5" y="22" width="4" height="4" fill="#b8a850"/><rect x="276" y="26" width="5" height="1" fill="#505050"/>
<path d="M294,25 l4,-6 l4,6 z" fill="#2a4aa8"/><circle cx="298" cy="23" r="3" fill="#3a5ab8"/><rect x="297.4" y="21" width="1.2" height="3.5" fill="#fff"/>
<rect x="311" y="19" width="6" height="7.5" fill="#dcdce4" stroke="#c8c8d0" stroke-width="0.5"/>
<circle cx="327.5" cy="22.5" r="3.8" fill="#b8a030"/><circle cx="326.5" cy="21.5" r="1.8" fill="#e8d870"/><path d="M324.5,25.5 q3,-2 6,0" stroke="#3a7a3a" stroke-width="1.2" fill="none"/>
<rect x="336.5" y="19" width="6" height="7.5" fill="#d8d8e0" stroke="#c0c0cc" stroke-width="0.5"/><rect x="348.5" y="19" width="6" height="7.5" fill="#d8d8e0" stroke="#c0c0cc" stroke-width="0.5"/>
<path d="M368,22 l2.5,3.5 l4,-6" stroke="#2a6a4a" stroke-width="1.8" fill="none"/>
<path d="M381,26 l6,-6" stroke="#3a5a40" stroke-width="2"/><circle cx="386.5" cy="20" r="1.2" fill="#8ac080"/>
<path d="M393.5,25.5 l5,-5" stroke="#c0c4cc" stroke-width="1.4"/><path d="M406,25 l5,-5" stroke="#c4c8d0" stroke-width="1.4"/>
</svg>
<div style="position:absolute;left:109.5px;top:17px;width:1px;height:12px;background:#b4bacb;border-right:1px solid #eef0f6;"></div>
<div style="position:absolute;left:140px;top:17px;width:1px;height:12px;background:#b4bacb;border-right:1px solid #eef0f6;"></div>
<div style="position:absolute;left:195.5px;top:17px;width:1px;height:12px;background:#b4bacb;border-right:1px solid #eef0f6;"></div>
<div style="position:absolute;left:225px;top:17px;width:1px;height:12px;background:#b4bacb;border-right:1px solid #eef0f6;"></div>
<div style="position:absolute;left:288.5px;top:17px;width:1px;height:12px;background:#b4bacb;border-right:1px solid #eef0f6;"></div>
<div style="position:absolute;left:362px;top:17px;width:1px;height:12px;background:#b4bacb;border-right:1px solid #eef0f6;"></div>
<div style="position:absolute;left:418px;top:15px;width:1px;height:16px;background:#b8bece;"></div>
<svg style="position:absolute;left:0;top:28" width="400" height="16" viewBox="0 28 400 16"><path d="M111,39.5 h8 v-1.5 h-8z" fill="#2a2a20"/><path d="M112,38 l1.5,-3.5 h4 l1.5,3.5z" fill="#c8a838"/><circle cx="115.5" cy="33.5" r="1.6" fill="#3a3a30"/><path d="M147,40 l2.5,-8" stroke="#d8d8d0" stroke-width="0.8"/><rect x="152.5" y="32.5" width="2" height="2" fill="#d8c040"/><path d="M153.5,34.5 v4.5 h2.5 M153.5,36.5 h2.5" stroke="#555" stroke-width="0.7" fill="none"/><rect x="156" y="35.5" width="2" height="1.8" fill="#303030"/><rect x="156" y="38.2" width="2" height="1.8" fill="#303030"/><circle cx="207.5" cy="35" r="2.3" fill="#f8f0c0" stroke="#c09818" stroke-width="1.1"/><path d="M209.2,36.8 l2.6,2.8" stroke="#404040" stroke-width="1.3"/><path d="M268.5,36 l2,3 l4.5,-6.5" stroke="#d0a820" stroke-width="1.3" fill="none"/></svg>
<div style="position:absolute;left:256px;top:372px;width:364px;height:236px;background:#c4dcec;"></div>
<div style="position:absolute;left:259px;top:373px;width:358px;height:8.5px;background:linear-gradient(#c2dcea,#96c3da);"></div>
<div style="position:absolute;left:259.5px;top:376.5px;width:4px;height:4.5px;background:#2a8a8a;border-radius:1px;"></div>
<div class="t s" style="left:265.5px;top:377.3px;font-size:3.4px;color:#1c1c1c;font-weight:normal;">Process Viewer - ECO - ECO #32</div>
<div style="position:absolute;left:259.5px;top:381px;width:357px;height:9px;background:#dde2ee;"></div>
<div class="t s" style="left:264px;top:383.8px;font-size:3.7px;color:#1c1c1c;font-weight:normal;">Process</div>
<div class="t s" style="left:280px;top:383.8px;font-size:3.7px;color:#1c1c1c;font-weight:normal;">View</div>
<div class="t s" style="left:292px;top:383.8px;font-size:3.7px;color:#1c1c1c;font-weight:normal;">Administration</div>
<div class="t s" style="left:319px;top:383.8px;font-size:3.7px;color:#1c1c1c;font-weight:normal;">Help</div>
<div style="position:absolute;left:259.5px;top:390px;width:353.5px;height:218px;background-color:#fdfcca;background-image:linear-gradient(#f3f0be 1px,transparent 1px),linear-gradient(90deg,#f3f0be 1px,transparent 1px);background-size:3px 3px;border-top:1px solid #b8b49c;"></div>
<div style="position:absolute;left:613px;top:390px;width:6px;height:218px;background:#f0f0f0;border-left:1px solid #d0d0d0;"></div>
<div style="position:absolute;left:613.5px;top:452px;width:5px;height:61px;background:#e2e2e2;border:1px solid #c0c0c0;"></div>
<svg style="position:absolute;left:0;top:0" width="1000" height="608" viewBox="0 0 1000 608">
<defs><marker id="ar" markerWidth="4" markerHeight="4" refX="3.5" refY="2" orient="auto"><path d="M0,0 L4,2 L0,4 z" fill="#444"/></marker></defs>
<rect x="295" y="484.7" width="9" height="10" fill="#cfc79a" stroke="#6f6a4e" stroke-width="0.8"/>
<line x1="304" y1="489.5" x2="313" y2="489.5" stroke="#555" stroke-width="0.6"  marker-end="url(#ar)"/>
<line x1="334.5" y1="489.5" x2="347" y2="489.5" stroke="#555" stroke-width="0.6"  marker-end="url(#ar)"/>
<line x1="369" y1="489.5" x2="381.5" y2="489.5" stroke="#555" stroke-width="0.6"  marker-end="url(#ar)"/>
<line x1="403" y1="489.5" x2="417" y2="489.5" stroke="#555" stroke-width="0.6" stroke-dasharray="1.5,1.2" marker-end="url(#ar)"/>
<line x1="438" y1="489.5" x2="451" y2="489.5" stroke="#555" stroke-width="0.6"  marker-end="url(#ar)"/>
<line x1="471.5" y1="489.5" x2="485" y2="489.5" stroke="#555" stroke-width="0.6"  marker-end="url(#ar)"/>
<line x1="438" y1="416" x2="451" y2="416" stroke="#555" stroke-width="0.6"  marker-end="url(#ar)"/>
<line x1="471.5" y1="416" x2="485" y2="416" stroke="#555" stroke-width="0.6"  marker-end="url(#ar)"/>
<line x1="505.5" y1="416" x2="518" y2="416" stroke="#555" stroke-width="0.6"  marker-end="url(#ar)"/>
<line x1="438" y1="456.5" x2="451" y2="456.5" stroke="#555" stroke-width="0.6"  marker-end="url(#ar)"/>
<line x1="471.5" y1="456.5" x2="485" y2="456.5" stroke="#555" stroke-width="0.6"  marker-end="url(#ar)"/>
<line x1="398" y1="484" x2="422" y2="430" stroke="#555" stroke-width="0.6" stroke-dasharray="1.5,1.2" marker-end="url(#ar)"/>
<line x1="400" y1="484" x2="413" y2="469" stroke="#555" stroke-width="0.6" stroke-dasharray="1.5,1.2" marker-end="url(#ar)"/>
<line x1="395" y1="496" x2="422" y2="557" stroke="#555" stroke-width="0.6" stroke-dasharray="1.5,1.2" marker-end="url(#ar)"/>
<line x1="438" y1="565" x2="452" y2="549" stroke="#555" stroke-width="0.6"  marker-end="url(#ar)"/>
<line x1="438" y1="569" x2="452" y2="569" stroke="#555" stroke-width="0.6"  marker-end="url(#ar)"/>
<line x1="438" y1="573" x2="452" y2="588" stroke="#555" stroke-width="0.6"  marker-end="url(#ar)"/>
<line x1="474" y1="538" x2="485" y2="538" stroke="#555" stroke-width="0.6"  marker-end="url(#ar)"/>
<line x1="474" y1="569" x2="485" y2="569" stroke="#555" stroke-width="0.6"  marker-end="url(#ar)"/>
<line x1="474" y1="598" x2="485" y2="598" stroke="#555" stroke-width="0.6"  marker-end="url(#ar)"/>
<line x1="506" y1="598" x2="518" y2="598" stroke="#555" stroke-width="0.6"  marker-end="url(#ar)"/>
<line x1="506" y1="541" x2="550" y2="566" stroke="#555" stroke-width="0.6"  marker-end="url(#ar)"/>
<line x1="506" y1="569" x2="550.5" y2="569" stroke="#555" stroke-width="0.6"  marker-end="url(#ar)"/>
<line x1="539" y1="594" x2="551" y2="577" stroke="#555" stroke-width="0.6"  marker-end="url(#ar)"/>
<line x1="572" y1="569" x2="585" y2="569" stroke="#555" stroke-width="0.6"  marker-end="url(#ar)"/>
<rect x="313.5" y="484.3" width="21" height="10" fill="#cdc59a" stroke="#6a6650" stroke-width="0.9"/><rect x="314.7" y="485.6" width="18.6" height="4.5" fill="#efedde"/><rect x="314.7" y="485.6" width="8.82" height="4.5" fill="#ffffff"/><line x1="324.0" y1="485.3" x2="324.0" y2="493.3" stroke="#8a8466" stroke-width="0.5"/><rect x="325.26" y="486.1" width="1.5" height="3" fill="#9a9688"/><rect x="329.04" y="486.1" width="3" height="3.2" fill="#5a5850"/><rect x="314.7" y="490.5" width="18.6" height="2.6" fill="#dcd6b0" stroke="#8a8466" stroke-width="0.3"/>
<text x="324.0" y="482.7" font-size="2.6" fill="#333" text-anchor="middle" font-family="Liberation Sans">Initiate Docs</text>
<text x="324.0" y="502.3" font-size="2.6" fill="#333" text-anchor="middle" font-family="Liberation Sans">Configuration</text>
<rect x="347" y="484.3" width="21" height="10" fill="#cdc59a" stroke="#6a6650" stroke-width="0.9"/><rect x="348.2" y="485.6" width="18.6" height="4.5" fill="#efedde"/><rect x="348.2" y="485.6" width="8.82" height="4.5" fill="#ffffff"/><line x1="357.5" y1="485.3" x2="357.5" y2="493.3" stroke="#8a8466" stroke-width="0.5"/><rect x="358.76" y="486.1" width="1.5" height="3" fill="#9a9688"/><rect x="362.54" y="486.1" width="3" height="3.2" fill="#5a5850"/><rect x="348.2" y="490.5" width="18.6" height="2.6" fill="#dcd6b0" stroke="#8a8466" stroke-width="0.3"/>
<text x="357.5" y="482.7" font-size="2.6" fill="#333" text-anchor="middle" font-family="Liberation Sans">Initiate Docs</text>
<text x="357.5" y="502.3" font-size="2.6" fill="#333" text-anchor="middle" font-family="Liberation Sans">Configuration</text>
<rect x="381.6" y="484.3" width="21" height="10" fill="#cdc59a" stroke="#6a6650" stroke-width="0.9"/><rect x="382.8" y="485.6" width="18.6" height="4.5" fill="#efedde"/><rect x="382.8" y="485.6" width="8.82" height="4.5" fill="#ffffff"/><line x1="392.1" y1="485.3" x2="392.1" y2="493.3" stroke="#8a8466" stroke-width="0.5"/><rect x="393.36" y="486.1" width="1.5" height="3" fill="#9a9688"/><rect x="397.14000000000004" y="486.1" width="3" height="3.2" fill="#5a5850"/><rect x="382.8" y="490.5" width="18.6" height="2.6" fill="#dcd6b0" stroke="#8a8466" stroke-width="0.3"/><rect x="384.6" y="486.3" width="2" height="3" fill="#3a9aa0"/><rect x="389.6" y="486.3" width="2" height="3" fill="#c04040"/>
<text x="392.1" y="482.7" font-size="2.6" fill="#333" text-anchor="middle" font-family="Liberation Sans">Initiate Docs</text>
<text x="392.1" y="502.3" font-size="2.6" fill="#333" text-anchor="middle" font-family="Liberation Sans">Configuration</text>
<rect x="417" y="484.3" width="21" height="10" fill="#cdc59a" stroke="#6a6650" stroke-width="0.9"/><rect x="418.2" y="485.6" width="18.6" height="4.5" fill="#efedde"/><rect x="418.2" y="485.6" width="8.82" height="4.5" fill="#ffffff"/><line x1="427.5" y1="485.3" x2="427.5" y2="493.3" stroke="#8a8466" stroke-width="0.5"/><rect x="428.76" y="486.1" width="1.5" height="3" fill="#9a9688"/><rect x="432.54" y="486.1" width="3" height="3.2" fill="#5a5850"/><rect x="418.2" y="490.5" width="18.6" height="2.6" fill="#dcd6b0" stroke="#8a8466" stroke-width="0.3"/>
<text x="427.5" y="479.7" font-size="2.6" fill="#333" text-anchor="middle" font-family="Liberation Sans">SW Update</text>
<text x="427.5" y="482.7" font-size="2.6" fill="#333" text-anchor="middle" font-family="Liberation Sans">Interface</text>
<text x="427.5" y="502.3" font-size="2.6" fill="#333" text-anchor="middle" font-family="Liberation Sans">Configuration</text>
<rect x="451" y="484.3" width="21" height="10" fill="#cdc59a" stroke="#6a6650" stroke-width="0.9"/><rect x="452.2" y="485.6" width="18.6" height="4.5" fill="#efedde"/><rect x="452.2" y="485.6" width="8.82" height="4.5" fill="#ffffff"/><line x1="461.5" y1="485.3" x2="461.5" y2="493.3" stroke="#8a8466" stroke-width="0.5"/><rect x="462.76" y="486.1" width="1.5" height="3" fill="#9a9688"/><rect x="466.54" y="486.1" width="3" height="3.2" fill="#5a5850"/><rect x="452.2" y="490.5" width="18.6" height="2.6" fill="#dcd6b0" stroke="#8a8466" stroke-width="0.3"/>
<text x="461.5" y="479.7" font-size="2.6" fill="#333" text-anchor="middle" font-family="Liberation Sans">SW Update</text>
<text x="461.5" y="482.7" font-size="2.6" fill="#333" text-anchor="middle" font-family="Liberation Sans">Interface</text>
<text x="461.5" y="498.8" font-size="2.6" fill="#333" text-anchor="middle" font-family="Liberation Sans">Software Engineer</text>
<text x="461.5" y="502.3" font-size="2.6" fill="#333" text-anchor="middle" font-family="Liberation Sans">SW/IS</text>
<rect x="485" y="484.3" width="21" height="10" fill="#cdc59a" stroke="#6a6650" stroke-width="0.9"/><rect x="486.2" y="485.6" width="18.6" height="4.5" fill="#efedde"/><rect x="486.2" y="485.6" width="8.82" height="4.5" fill="#ffffff"/><line x1="495.5" y1="485.3" x2="495.5" y2="493.3" stroke="#8a8466" stroke-width="0.5"/><rect x="496.76" y="486.1" width="1.5" height="3" fill="#9a9688"/><rect x="500.54" y="486.1" width="3" height="3.2" fill="#5a5850"/><rect x="486.2" y="490.5" width="18.6" height="2.6" fill="#dcd6b0" stroke="#8a8466" stroke-width="0.3"/>
<text x="495.5" y="479.7" font-size="2.6" fill="#333" text-anchor="middle" font-family="Liberation Sans">SW Update</text>
<text x="495.5" y="482.7" font-size="2.6" fill="#333" text-anchor="middle" font-family="Liberation Sans">Interface</text>
<text x="495.5" y="502.3" font-size="2.6" fill="#333" text-anchor="middle" font-family="Liberation Sans">Configuration</text>
<rect x="417" y="411.3" width="21" height="10" fill="#cdc59a" stroke="#6a6650" stroke-width="0.9"/><rect x="418.2" y="412.6" width="18.6" height="4.5" fill="#efedde"/><rect x="418.2" y="412.6" width="8.82" height="4.5" fill="#ffffff"/><line x1="427.5" y1="412.3" x2="427.5" y2="420.3" stroke="#8a8466" stroke-width="0.5"/><rect x="428.76" y="413.1" width="1.5" height="3" fill="#9a9688"/><rect x="432.54" y="413.1" width="3" height="3.2" fill="#5a5850"/><rect x="418.2" y="417.5" width="18.6" height="2.6" fill="#dcd6b0" stroke="#8a8466" stroke-width="0.3"/>
<text x="427.5" y="406.7" font-size="2.6" fill="#333" text-anchor="middle" font-family="Liberation Sans">SW Update</text>
<text x="427.5" y="409.7" font-size="2.6" fill="#333" text-anchor="middle" font-family="Liberation Sans">Interface</text>
<text x="427.5" y="425.8" font-size="2.6" fill="#333" text-anchor="middle" font-family="Liberation Sans">Software Engineer</text>
<text x="427.5" y="429.3" font-size="2.6" fill="#333" text-anchor="middle" font-family="Liberation Sans">SW/IS</text>
<rect x="451" y="411.3" width="21" height="10" fill="#cdc59a" stroke="#6a6650" stroke-width="0.9"/><rect x="452.2" y="412.6" width="18.6" height="4.5" fill="#efedde"/><rect x="452.2" y="412.6" width="8.82" height="4.5" fill="#ffffff"/><line x1="461.5" y1="412.3" x2="461.5" y2="420.3" stroke="#8a8466" stroke-width="0.5"/><rect x="462.76" y="413.1" width="1.5" height="3" fill="#9a9688"/><rect x="466.54" y="413.1" width="3" height="3.2" fill="#5a5850"/><rect x="452.2" y="417.5" width="18.6" height="2.6" fill="#dcd6b0" stroke="#8a8466" stroke-width="0.3"/>
<text x="461.5" y="406.7" font-size="2.6" fill="#333" text-anchor="middle" font-family="Liberation Sans">SW Update</text>
<text x="461.5" y="409.7" font-size="2.6" fill="#333" text-anchor="middle" font-family="Liberation Sans">Interface</text>
<text x="461.5" y="429.3" font-size="2.6" fill="#333" text-anchor="middle" font-family="Liberation Sans">Configuration</text>
<rect x="485" y="411.3" width="21" height="10" fill="#cdc59a" stroke="#6a6650" stroke-width="0.9"/><rect x="486.2" y="412.6" width="18.6" height="4.5" fill="#efedde"/><rect x="486.2" y="412.6" width="8.82" height="4.5" fill="#ffffff"/><line x1="495.5" y1="412.3" x2="495.5" y2="420.3" stroke="#8a8466" stroke-width="0.5"/><rect x="496.76" y="413.1" width="1.5" height="3" fill="#9a9688"/><rect x="500.54" y="413.1" width="3" height="3.2" fill="#5a5850"/><rect x="486.2" y="417.5" width="18.6" height="2.6" fill="#dcd6b0" stroke="#8a8466" stroke-width="0.3"/>
<text x="495.5" y="406.7" font-size="2.6" fill="#333" text-anchor="middle" font-family="Liberation Sans">SW Update</text>
<text x="495.5" y="409.7" font-size="2.6" fill="#333" text-anchor="middle" font-family="Liberation Sans">Interface</text>
<text x="495.5" y="425.8" font-size="2.6" fill="#333" text-anchor="middle" font-family="Liberation Sans">Software Engineer</text>
<text x="495.5" y="429.3" font-size="2.6" fill="#333" text-anchor="middle" font-family="Liberation Sans">SW/IS</text>
<rect x="518.3" y="411.3" width="21" height="10" fill="#cdc59a" stroke="#6a6650" stroke-width="0.9"/><rect x="519.5" y="412.6" width="18.6" height="4.5" fill="#efedde"/><rect x="519.5" y="412.6" width="8.82" height="4.5" fill="#ffffff"/><line x1="528.8" y1="412.3" x2="528.8" y2="420.3" stroke="#8a8466" stroke-width="0.5"/><rect x="530.06" y="413.1" width="1.5" height="3" fill="#9a9688"/><rect x="533.8399999999999" y="413.1" width="3" height="3.2" fill="#5a5850"/><rect x="519.5" y="417.5" width="18.6" height="2.6" fill="#dcd6b0" stroke="#8a8466" stroke-width="0.3"/>
<text x="528.8" y="409.7" font-size="2.6" fill="#333" text-anchor="middle" font-family="Liberation Sans">Initiate Docs</text>
<text x="528.8" y="429.3" font-size="2.6" fill="#333" text-anchor="middle" font-family="Liberation Sans">Configuration</text>
<rect x="417" y="451.7" width="21" height="10" fill="#cdc59a" stroke="#6a6650" stroke-width="0.9"/><rect x="418.2" y="453.0" width="18.6" height="4.5" fill="#efedde"/><rect x="418.2" y="453.0" width="8.82" height="4.5" fill="#ffffff"/><line x1="427.5" y1="452.7" x2="427.5" y2="460.7" stroke="#8a8466" stroke-width="0.5"/><rect x="428.76" y="453.5" width="1.5" height="3" fill="#9a9688"/><rect x="432.54" y="453.5" width="3" height="3.2" fill="#5a5850"/><rect x="418.2" y="457.9" width="18.6" height="2.6" fill="#dcd6b0" stroke="#8a8466" stroke-width="0.3"/>
<text x="427.5" y="447.09999999999997" font-size="2.6" fill="#333" text-anchor="middle" font-family="Liberation Sans">SW Update</text>
<text x="427.5" y="450.09999999999997" font-size="2.6" fill="#333" text-anchor="middle" font-family="Liberation Sans">Interface</text>
<text x="427.5" y="469.7" font-size="2.6" fill="#333" text-anchor="middle" font-family="Liberation Sans">Configuration</text>
<rect x="451" y="451.7" width="21" height="10" fill="#cdc59a" stroke="#6a6650" stroke-width="0.9"/><rect x="452.2" y="453.0" width="18.6" height="4.5" fill="#efedde"/><rect x="452.2" y="453.0" width="8.82" height="4.5" fill="#ffffff"/><line x1="461.5" y1="452.7" x2="461.5" y2="460.7" stroke="#8a8466" stroke-width="0.5"/><rect x="462.76" y="453.5" width="1.5" height="3" fill="#9a9688"/><rect x="466.54" y="453.5" width="3" height="3.2" fill="#5a5850"/><rect x="452.2" y="457.9" width="18.6" height="2.6" fill="#dcd6b0" stroke="#8a8466" stroke-width="0.3"/>
<text x="461.5" y="447.09999999999997" font-size="2.6" fill="#333" text-anchor="middle" font-family="Liberation Sans">SW Update</text>
<text x="461.5" y="450.09999999999997" font-size="2.6" fill="#333" text-anchor="middle" font-family="Liberation Sans">Interface</text>
<text x="461.5" y="466.2" font-size="2.6" fill="#333" text-anchor="middle" font-family="Liberation Sans">Software Engineer</text>
<text x="461.5" y="469.7" font-size="2.6" fill="#333" text-anchor="middle" font-family="Liberation Sans">SW/IS</text>
<rect x="485" y="451.7" width="21" height="10" fill="#cdc59a" stroke="#6a6650" stroke-width="0.9"/><rect x="486.2" y="453.0" width="18.6" height="4.5" fill="#efedde"/><rect x="486.2" y="453.0" width="8.82" height="4.5" fill="#ffffff"/><line x1="495.5" y1="452.7" x2="495.5" y2="460.7" stroke="#8a8466" stroke-width="0.5"/><rect x="496.76" y="453.5" width="1.5" height="3" fill="#9a9688"/><rect x="500.54" y="453.5" width="3" height="3.2" fill="#5a5850"/><rect x="486.2" y="457.9" width="18.6" height="2.6" fill="#dcd6b0" stroke="#8a8466" stroke-width="0.3"/>
<text x="495.5" y="450.09999999999997" font-size="2.6" fill="#333" text-anchor="middle" font-family="Liberation Sans">Initiate Docs</text>
<text x="495.5" y="469.7" font-size="2.6" fill="#333" text-anchor="middle" font-family="Liberation Sans">Configuration</text>
<rect x="452" y="533" width="21" height="10" fill="#cdc59a" stroke="#6a6650" stroke-width="0.9"/><rect x="453.2" y="534.3" width="18.6" height="4.5" fill="#efedde"/><rect x="453.2" y="534.3" width="8.82" height="4.5" fill="#ffffff"/><line x1="462.5" y1="534" x2="462.5" y2="542" stroke="#8a8466" stroke-width="0.5"/><rect x="463.76" y="534.8" width="1.5" height="3" fill="#9a9688"/><rect x="467.54" y="534.8" width="3" height="3.2" fill="#5a5850"/><rect x="453.2" y="539.2" width="18.6" height="2.6" fill="#dcd6b0" stroke="#8a8466" stroke-width="0.3"/>
<text x="462.5" y="531.4" font-size="2.6" fill="#333" text-anchor="middle" font-family="Liberation Sans">Initiate Docs</text>
<text x="462.5" y="551" font-size="2.6" fill="#333" text-anchor="middle" font-family="Liberation Sans">Configuration</text>
<rect x="485" y="533" width="21" height="10" fill="#cdc59a" stroke="#6a6650" stroke-width="0.9"/><rect x="486.2" y="534.3" width="18.6" height="4.5" fill="#efedde"/><rect x="486.2" y="534.3" width="8.82" height="4.5" fill="#ffffff"/><line x1="495.5" y1="534" x2="495.5" y2="542" stroke="#8a8466" stroke-width="0.5"/><rect x="496.76" y="534.8" width="1.5" height="3" fill="#9a9688"/><rect x="500.54" y="534.8" width="3" height="3.2" fill="#5a5850"/><rect x="486.2" y="539.2" width="18.6" height="2.6" fill="#dcd6b0" stroke="#8a8466" stroke-width="0.3"/>
<text x="495.5" y="531.4" font-size="2.6" fill="#333" text-anchor="middle" font-family="Liberation Sans">Initiate Docs</text>
<text x="495.5" y="547.5" font-size="2.6" fill="#333" text-anchor="middle" font-family="Liberation Sans">Software Engineer</text>
<text x="495.5" y="551" font-size="2.6" fill="#333" text-anchor="middle" font-family="Liberation Sans">SW/IS</text>
<rect x="417" y="563" width="21" height="10" fill="#cdc59a" stroke="#6a6650" stroke-width="0.9"/><rect x="418.2" y="564.3" width="18.6" height="4.5" fill="#efedde"/><rect x="418.2" y="564.3" width="8.82" height="4.5" fill="#ffffff"/><line x1="427.5" y1="564" x2="427.5" y2="572" stroke="#8a8466" stroke-width="0.5"/><rect x="428.76" y="564.8" width="1.5" height="3" fill="#9a9688"/><rect x="432.54" y="564.8" width="3" height="3.2" fill="#5a5850"/><rect x="418.2" y="569.2" width="18.6" height="2.6" fill="#dcd6b0" stroke="#8a8466" stroke-width="0.3"/>
<text x="427.5" y="561.4" font-size="2.6" fill="#333" text-anchor="middle" font-family="Liberation Sans">Initiate Docs</text>
<text x="427.5" y="577.5" font-size="2.6" fill="#333" text-anchor="middle" font-family="Liberation Sans">Software Engineer</text>
<text x="427.5" y="581" font-size="2.6" fill="#333" text-anchor="middle" font-family="Liberation Sans">SW/IS</text>
<rect x="452" y="563" width="21" height="10" fill="#cdc59a" stroke="#6a6650" stroke-width="0.9"/><rect x="453.2" y="564.3" width="18.6" height="4.5" fill="#efedde"/><rect x="453.2" y="564.3" width="8.82" height="4.5" fill="#ffffff"/><line x1="462.5" y1="564" x2="462.5" y2="572" stroke="#8a8466" stroke-width="0.5"/><rect x="463.76" y="564.8" width="1.5" height="3" fill="#9a9688"/><rect x="467.54" y="564.8" width="3" height="3.2" fill="#5a5850"/><rect x="453.2" y="569.2" width="18.6" height="2.6" fill="#dcd6b0" stroke="#8a8466" stroke-width="0.3"/>
<text x="462.5" y="561.4" font-size="2.6" fill="#333" text-anchor="middle" font-family="Liberation Sans">Initiate Docs</text>
<text x="462.5" y="581" font-size="2.6" fill="#333" text-anchor="middle" font-family="Liberation Sans">Configuration</text>
<rect x="485" y="563" width="21" height="10" fill="#cdc59a" stroke="#6a6650" stroke-width="0.9"/><rect x="486.2" y="564.3" width="18.6" height="4.5" fill="#efedde"/><rect x="486.2" y="564.3" width="8.82" height="4.5" fill="#ffffff"/><line x1="495.5" y1="564" x2="495.5" y2="572" stroke="#8a8466" stroke-width="0.5"/><rect x="496.76" y="564.8" width="1.5" height="3" fill="#9a9688"/><rect x="500.54" y="564.8" width="3" height="3.2" fill="#5a5850"/><rect x="486.2" y="569.2" width="18.6" height="2.6" fill="#dcd6b0" stroke="#8a8466" stroke-width="0.3"/>
<text x="495.5" y="561.4" font-size="2.6" fill="#333" text-anchor="middle" font-family="Liberation Sans">Initiate Docs</text>
<text x="495.5" y="577.5" font-size="2.6" fill="#333" text-anchor="middle" font-family="Liberation Sans">Software Engineer</text>
<text x="495.5" y="581" font-size="2.6" fill="#333" text-anchor="middle" font-family="Liberation Sans">SW/IS</text>
<rect x="551" y="563" width="21" height="10" fill="#cdc59a" stroke="#6a6650" stroke-width="0.9"/><rect x="552.2" y="564.3" width="18.6" height="4.5" fill="#efedde"/><rect x="552.2" y="564.3" width="8.82" height="4.5" fill="#ffffff"/><line x1="561.5" y1="564" x2="561.5" y2="572" stroke="#8a8466" stroke-width="0.5"/><rect x="562.76" y="564.8" width="1.5" height="3" fill="#9a9688"/><rect x="566.54" y="564.8" width="3" height="3.2" fill="#5a5850"/><rect x="552.2" y="569.2" width="18.6" height="2.6" fill="#dcd6b0" stroke="#8a8466" stroke-width="0.3"/>
<text x="561.5" y="561.4" font-size="2.6" fill="#333" text-anchor="middle" font-family="Liberation Sans">Initiate Docs</text>
<text x="561.5" y="577.5" font-size="2.6" fill="#333" text-anchor="middle" font-family="Liberation Sans">Software Engineer</text>
<text x="561.5" y="581" font-size="2.6" fill="#333" text-anchor="middle" font-family="Liberation Sans">SW/IS</text>
<rect x="585" y="563" width="21" height="10" fill="#cdc59a" stroke="#6a6650" stroke-width="0.9"/><rect x="586.2" y="564.3" width="18.6" height="4.5" fill="#efedde"/><rect x="586.2" y="564.3" width="8.82" height="4.5" fill="#ffffff"/><line x1="595.5" y1="564" x2="595.5" y2="572" stroke="#8a8466" stroke-width="0.5"/><rect x="596.76" y="564.8" width="1.5" height="3" fill="#9a9688"/><rect x="600.54" y="564.8" width="3" height="3.2" fill="#5a5850"/><rect x="586.2" y="569.2" width="18.6" height="2.6" fill="#dcd6b0" stroke="#8a8466" stroke-width="0.3"/>
<text x="595.5" y="561.4" font-size="2.6" fill="#333" text-anchor="middle" font-family="Liberation Sans">Initiate Docs</text>
<text x="595.5" y="581" font-size="2.6" fill="#333" text-anchor="middle" font-family="Liberation Sans">Configuration</text>
<rect x="452" y="592.5" width="21" height="10" fill="#cdc59a" stroke="#6a6650" stroke-width="0.9"/><rect x="453.2" y="593.8" width="18.6" height="4.5" fill="#efedde"/><rect x="453.2" y="593.8" width="8.82" height="4.5" fill="#ffffff"/><line x1="462.5" y1="593.5" x2="462.5" y2="601.5" stroke="#8a8466" stroke-width="0.5"/><rect x="463.76" y="594.3" width="1.5" height="3" fill="#9a9688"/><rect x="467.54" y="594.3" width="3" height="3.2" fill="#5a5850"/><rect x="453.2" y="598.7" width="18.6" height="2.6" fill="#dcd6b0" stroke="#8a8466" stroke-width="0.3"/>
<text x="462.5" y="590.9" font-size="2.6" fill="#333" text-anchor="middle" font-family="Liberation Sans">Initiate Docs</text>
<text x="462.5" y="607.0" font-size="2.6" fill="#333" text-anchor="middle" font-family="Liberation Sans">Software Engineer</text>
<text x="462.5" y="610.5" font-size="2.6" fill="#333" text-anchor="middle" font-family="Liberation Sans">SW/IS</text>
<rect x="485" y="592.5" width="21" height="10" fill="#cdc59a" stroke="#6a6650" stroke-width="0.9"/><rect x="486.2" y="593.8" width="18.6" height="4.5" fill="#efedde"/><rect x="486.2" y="593.8" width="8.82" height="4.5" fill="#ffffff"/><line x1="495.5" y1="593.5" x2="495.5" y2="601.5" stroke="#8a8466" stroke-width="0.5"/><rect x="496.76" y="594.3" width="1.5" height="3" fill="#9a9688"/><rect x="500.54" y="594.3" width="3" height="3.2" fill="#5a5850"/><rect x="486.2" y="598.7" width="18.6" height="2.6" fill="#dcd6b0" stroke="#8a8466" stroke-width="0.3"/>
<text x="495.5" y="590.9" font-size="2.6" fill="#333" text-anchor="middle" font-family="Liberation Sans">Initiate Docs</text>
<text x="495.5" y="607.0" font-size="2.6" fill="#333" text-anchor="middle" font-family="Liberation Sans">Software Engineer</text>
<text x="495.5" y="610.5" font-size="2.6" fill="#333" text-anchor="middle" font-family="Liberation Sans">SW/IS</text>
<rect x="518" y="592.5" width="21" height="10" fill="#cdc59a" stroke="#6a6650" stroke-width="0.9"/><rect x="519.2" y="593.8" width="18.6" height="4.5" fill="#efedde"/><rect x="519.2" y="593.8" width="8.82" height="4.5" fill="#ffffff"/><line x1="528.5" y1="593.5" x2="528.5" y2="601.5" stroke="#8a8466" stroke-width="0.5"/><rect x="529.76" y="594.3" width="1.5" height="3" fill="#9a9688"/><rect x="533.54" y="594.3" width="3" height="3.2" fill="#5a5850"/><rect x="519.2" y="598.7" width="18.6" height="2.6" fill="#dcd6b0" stroke="#8a8466" stroke-width="0.3"/>
<text x="528.5" y="590.9" font-size="2.6" fill="#333" text-anchor="middle" font-family="Liberation Sans">Initiate Docs</text>
<text x="528.5" y="607.0" font-size="2.6" fill="#333" text-anchor="middle" font-family="Liberation Sans">Software Engineer</text>
<text x="528.5" y="610.5" font-size="2.6" fill="#333" text-anchor="middle" font-family="Liberation Sans">SW/IS</text>
</svg>
<div style="position:absolute;left:259.8px;top:522.7px;width:36px;height:86px;background:#fbfad8;border:1px solid #6e6a58;"></div>
<div style="position:absolute;left:259.8px;top:522.7px;width:36px;height:6px;background:#5a5648;"></div>
<div class="t s" style="left:263px;top:524.2px;font-size:3.4px;color:#eee;font-weight:bold;">L&nbsp;&nbsp;E&nbsp;&nbsp;G&nbsp;&nbsp;E&nbsp;&nbsp;N&nbsp;&nbsp;D</div>
<div style="position:absolute;left:263.5px;top:533.1px;width:4px;height:4px;background:#e8dca0;border-radius:1px;"></div>
<div class="t s" style="left:270px;top:533.7px;font-size:3.6px;color:#111;font-weight:bold;">Activity</div>
<div style="position:absolute;left:263.5px;top:541.0px;width:4px;height:4px;background:#e8d090;border-radius:1px;"></div>
<div class="t s" style="left:270px;top:539.6px;font-size:3.6px;color:#111;font-weight:bold;">Activity</div>
<div class="t s" style="left:270px;top:542.9px;font-size:3.6px;color:#111;font-weight:bold;">Past Due</div>
<div style="position:absolute;left:263.5px;top:549.3px;width:4px;height:4px;background:#d83030;border-radius:1px;"></div>
<div class="t s" style="left:270px;top:549.9px;font-size:3.6px;color:#111;font-weight:bold;">Suspended</div>
<div style="position:absolute;left:263.5px;top:556.0px;width:4px;height:4px;background:#d8a040;border-radius:1px;"></div>
<div class="t s" style="left:270px;top:556.6px;font-size:3.6px;color:#111;font-weight:bold;">On Hold</div>
<div style="position:absolute;left:263.5px;top:562.5px;width:4px;height:4px;background:#606058;border-radius:1px;"></div>
<div class="t s" style="left:270px;top:563.1px;font-size:3.6px;color:#111;font-weight:bold;">Readlocked</div>
<div style="position:absolute;left:263.5px;top:569.0px;width:4px;height:4px;background:#50a050;border-radius:1px;"></div>
<div class="t s" style="left:270px;top:569.6px;font-size:3.6px;color:#111;font-weight:bold;">In Progress</div>
<div style="position:absolute;left:263.5px;top:575.5px;width:4px;height:4px;background:#4060a0;border-radius:1px;"></div>
<div class="t s" style="left:270px;top:576.1px;font-size:3.6px;color:#111;font-weight:bold;">Done <span style="font-weight:normal;font-size:2.6px">(on time)</span></div>
<div style="position:absolute;left:263.5px;top:582.0px;width:4px;height:4px;background:#60a060;border-radius:1px;"></div>
<div class="t s" style="left:270px;top:582.6px;font-size:3.6px;color:#111;font-weight:bold;">Done <span style="font-weight:normal;font-size:2.6px">(early)</span></div>
<div style="position:absolute;left:263.5px;top:588.5px;width:4px;height:4px;background:#c0a040;border-radius:1px;"></div>
<div class="t s" style="left:270px;top:589.1px;font-size:3.6px;color:#111;font-weight:bold;">Done <span style="font-weight:normal;font-size:2.6px">(late)</span></div>
<div style="position:absolute;left:263.5px;top:596.0px;width:4px;height:4px;background:#404040;border-radius:1px;"></div>
<div class="t s" style="left:270px;top:594.6px;font-size:3.6px;color:#111;font-weight:bold;">Resource</div>
<div class="t s" style="left:270px;top:597.9px;font-size:3.6px;color:#111;font-weight:bold;">Assigned</div>
<div style="position:absolute;left:263.5px;top:604.5px;width:4px;height:4px;background:#888;border-radius:1px;"></div>
<div class="t s" style="left:270px;top:605.1px;font-size:3.6px;color:#111;font-weight:bold;">Connector</div>
<div style="position:absolute;left:561px;top:144px;width:280px;height:306px;background:#c6deee;border:1px solid #9ab8cc;"></div>
<div style="position:absolute;left:562px;top:144.5px;width:278px;height:8px;background:linear-gradient(#a8cde6,#8dbcda);"></div>
<div style="position:absolute;left:564.4px;top:146.8px;width:4.2px;height:4.2px;background:#2a5a90;border-radius:50%;"></div>
<div class="t s" style="left:570.5px;top:148.6px;font-size:3.7px;color:#2a3a4a;font-weight:normal;">ECO #32 (A v1) Digital Video Recorder High-Definition Video Option</div>
<div style="position:absolute;left:800px;top:146px;width:4px;height:4px;background:#3a5a8a;border-radius:1px;transform:rotate(45deg);"></div>
<div style="position:absolute;left:808px;top:145.5px;width:10px;height:6px;background:linear-gradient(#e0ecf6,#b8d0e4);border:1px solid #8aa8c0;border-radius:1px;"></div>
<div style="position:absolute;left:818px;top:145.5px;width:10px;height:6px;background:linear-gradient(#e0ecf6,#b8d0e4);border:1px solid #8aa8c0;border-radius:1px;"></div>
<div style="position:absolute;left:828px;top:145.5px;width:11px;height:6px;background:linear-gradient(#e89080,#c04030);border:1px solid #8a3020;border-radius:1px;"></div>
<div style="position:absolute;left:565px;top:152.5px;width:272px;height:7.2px;background:#fbfbf8;border-bottom:1px solid #c8c4b8;"></div>
<div class="t s" style="left:566px;top:155.9px;font-size:3.7px;color:#1c1c1c;font-weight:normal;">◂</div>
<div class="t s" style="left:575.5px;top:155.9px;font-size:3.7px;color:#1c1c1c;font-weight:bold;">Properties</div>
<div class="t s" style="left:597px;top:155.9px;font-size:3.7px;color:#1c1c1c;font-weight:normal;">Links</div>
<div class="t s" style="left:609px;top:155.9px;font-size:3.7px;color:#1c1c1c;font-weight:normal;">Affects Items</div>
<div class="t s" style="left:633px;top:155.9px;font-size:3.7px;color:#1c1c1c;font-weight:normal;">Versions</div>
<div class="t s" style="left:652px;top:155.9px;font-size:3.7px;color:#1c1c1c;font-weight:normal;">Where Used</div>
<div class="t s" style="left:675px;top:155.9px;font-size:3.7px;color:#1c1c1c;font-weight:normal;">Process</div>
<div style="position:absolute;left:594px;top:153.5px;width:0.8px;height:5.5px;background:#b8b4a8;"></div>
<div style="position:absolute;left:607px;top:153.5px;width:0.8px;height:5.5px;background:#b8b4a8;"></div>
<div style="position:absolute;left:631px;top:153.5px;width:0.8px;height:5.5px;background:#b8b4a8;"></div>
<div style="position:absolute;left:650px;top:153.5px;width:0.8px;height:5.5px;background:#b8b4a8;"></div>
<div style="position:absolute;left:672px;top:153.5px;width:0.8px;height:5.5px;background:#b8b4a8;"></div>
<div style="position:absolute;left:690px;top:153.5px;width:0.8px;height:5.5px;background:#b8b4a8;"></div>
<div class="t s" style="left:832px;top:155.5px;font-size:3.6px;color:#3a3a3a;font-weight:normal;">▸</div>
<div style="position:absolute;left:565px;top:159.7px;width:268px;height:283.3px;background:#e6e1d4;"></div>
<div style="position:absolute;left:829px;top:159px;width:7px;height:172px;background:#f3f1ea;border-left:1px solid #d6d2c6;"></div>
<div class="t s" style="left:830.5px;top:160px;font-size:3.5px;color:#777;font-weight:normal;">▴</div>
<div style="position:absolute;left:566px;top:160px;width:41px;height:44px;background:#f0ece1;"></div>
<div style="position:absolute;left:684px;top:160px;width:39px;height:44px;background:#f0ece1;"></div>
<div class="t s" style="left:564.5px;top:165.90px;width:40px;text-align:right;font-size:3.5px;color:#555">Name :</div>
<div style="position:absolute;left:607.5px;top:162.9px;width:76.0px;height:7.4px;background:#dad4c6;"></div>
<div class="t s" style="left:609.0px;top:165.8px;font-size:3.9px;color:#4a4a4a;font-weight:normal;">ECO #32</div>
<div class="t s" style="left:564.5px;top:174.00px;width:40px;text-align:right;font-size:3.5px;color:#555">Prepared :</div>
<div style="position:absolute;left:607.5px;top:171.0px;width:76.0px;height:7.4px;background:#dad4c6;"></div>
<div class="t s" style="left:609.0px;top:173.9px;font-size:3.9px;color:#4a4a4a;font-weight:normal;">Ed Daniels</div>
<div class="t s" style="left:564.5px;top:182.20px;width:40px;text-align:right;font-size:3.5px;color:#555">Modified By :</div>
<div style="position:absolute;left:607.5px;top:179.20000000000002px;width:76.0px;height:7.4px;background:#dad4c6;"></div>
<div class="t s" style="left:609.0px;top:182.1px;font-size:3.9px;color:#4a4a4a;font-weight:normal;">CMS DBA</div>
<div class="t s" style="left:564.5px;top:190.40px;width:40px;text-align:right;font-size:3.5px;color:#555">Status :</div>
<div style="position:absolute;left:607.5px;top:187.4px;width:76.0px;height:7.4px;background:#dad4c6;"></div>
<div class="t s" style="left:609.0px;top:190.3px;font-size:3.9px;color:#4a4a4a;font-weight:normal;">In Progress</div>
<div class="t s" style="left:680.5px;top:165.90px;width:40px;text-align:right;font-size:3.5px;color:#555">Title :</div>
<div style="position:absolute;left:723.5px;top:162.9px;width:105.5px;height:7.4px;background:#dad4c6;"></div>
<div class="t s" style="left:725.0px;top:165.8px;font-size:3.9px;color:#4a4a4a;font-weight:normal;">Digital Video Recorder High-Definition Video Option</div>
<div class="t s" style="left:680.5px;top:174.00px;width:40px;text-align:right;font-size:3.5px;color:#555">Prepared On :</div>
<div style="position:absolute;left:723.5px;top:171.0px;width:105.5px;height:7.4px;background:#dad4c6;"></div>
<div class="t s" style="left:725.0px;top:173.9px;font-size:3.9px;color:#4a4a4a;font-weight:normal;">25-NOV-2008</div>
<div class="t s" style="left:680.5px;top:182.20px;width:40px;text-align:right;font-size:3.5px;color:#555">Modified On :</div>
<div style="position:absolute;left:723.5px;top:179.20000000000002px;width:105.5px;height:7.4px;background:#dad4c6;"></div>
<div class="t s" style="left:725.0px;top:182.1px;font-size:3.9px;color:#4a4a4a;font-weight:normal;">11-JAN-2010</div>
<div class="t s" style="left:680.5px;top:190.40px;width:40px;text-align:right;font-size:3.5px;color:#555">Delivered On :</div>
<div style="position:absolute;left:723.5px;top:187.4px;width:105.5px;height:7.4px;background:#dad4c6;"></div>
<div class="t s" style="left:564.5px;top:198.40px;width:40px;text-align:right;font-size:3.5px;color:#555">Description :</div>
<div style="position:absolute;left:607.5px;top:195.4px;width:221.5px;height:7.4px;background:#dad4c6;"></div>
<div class="t s" style="left:609.0px;top:198.3px;font-size:3.9px;color:#4a4a4a;font-weight:normal;">Evaluate addition of high-definition video capability to existing Digital Video Recorder.</div>
<div class="t" style="left:564.5px;top:206.3px;width:40px;text-align:right;font-size:3.5px;color:#555">Markup :</div>
<div style="position:absolute;left:609.3px;top:205.6px;width:182px;height:124.5px;background:#363839;"></div>
<div style="position:absolute;left:621.5px;top:207px;width:158px;height:121.4px;background:#ffffff;"></div>
<div style="position:absolute;left:791px;top:205.6px;width:6px;height:124.5px;background:#f6f4ee;border:1px solid #cfcabd;"></div>
<svg style="position:absolute;left:0;top:0" width="1000" height="608" viewBox="0 0 1000 608">
<polygon points="730,279 776,289 777,296 750,305 722,298" fill="#7c7c7c"/>
<polygon points="755,259.6 776,268 776,285 755,277" fill="#5c5c5c"/>
<polygon points="759,265 772,270 772,273 759,268" fill="#303030"/><polygon points="759,271 772,276 772,279 759,274" fill="#303030"/>
<polygon points="743,275 777,285 777,288 743,278" fill="#c8c8c8"/>
<polygon points="661.3,280.9 690,272 745,291.7 720.2,299.9" fill="#262626"/>
<polygon points="720.2,299.9 745,291.7 745,309 720.2,319.8" fill="#4a4a4e"/>
<polygon points="661.3,280.9 720.2,299.9 720.2,319.8 661.3,294.4" fill="#dcdce0" stroke="#a0a0a8" stroke-width="0.4"/>
<rect x="665" y="287" width="2.2" height="2" fill="#333"/><rect x="671" y="289" width="6" height="5" fill="#666"/><circle cx="700" cy="300" r="0.8" fill="#333"/>
<polygon points="694,283.6 715,276 734.6,288 712,297" fill="#2aa848"/>
<polygon points="704,286 716,282 722,286 710,290" fill="#c8ecd0"/>
<polygon points="710,271 726,266 736,276 734.6,288 715,276" fill="#505050"/>
<polygon points="673,268 700,262 712,272 712,281 700,284 678,280" fill="#dcd6cc"/>
<circle cx="682" cy="275" r="2.2" fill="#b8b0a8"/>
<polygon points="696.4,262.6 710.3,266 710.3,270.7 700,271" fill="#2a2a2a"/>
<polygon points="700,276 712,272 716,281 704,284" fill="#e8d4e4"/>
<polygon points="672.3,241.9 732.3,270 732.3,273.5 672.3,245.5" fill="#b8aebc"/>
<polygon points="672.3,241.9 681,246 681,258.5 671.7,254.5" fill="#9a8c9a"/>
<polygon points="675,250 689,255 689,259 675,254" fill="#2e2e2e"/>
<polygon points="732.3,270 761,253.2 761,263.5 732.3,280.3" fill="#8e7e90"/>
<polygon points="672.3,241.9 702.2,225.8 761,253.2 732.3,270" fill="#d2cdd8" stroke="#b0a8b8" stroke-width="0.4"/>
<polygon points="698,247 716,243 730,251 712,255" fill="#c4bdca"/>
</svg>
<div style="position:absolute;left:566px;top:332px;width:41px;height:26px;background:#f0ece1;"></div>
<div style="position:absolute;left:684px;top:332px;width:39px;height:26px;background:#f0ece1;"></div>
<div class="t s" style="left:564.5px;top:336.20px;width:40px;text-align:right;font-size:3.5px;color:#555">Type of Change :</div>
<div style="position:absolute;left:607.5px;top:333.2px;width:76.0px;height:7.4px;background:#dad4c6;"></div>
<div class="t s" style="left:609.0px;top:336.1px;font-size:3.9px;color:#4a4a4a;font-weight:normal;">Documentation and BOM</div>
<div class="t s" style="left:680.5px;top:336.20px;width:40px;text-align:right;font-size:3.5px;color:#555">Product Line :</div>
<div style="position:absolute;left:723.5px;top:333.2px;width:105.5px;height:7.4px;background:#dad4c6;"></div>
<div class="t s" style="left:564.5px;top:344.60px;width:40px;text-align:right;font-size:3.5px;color:#555">Reason for Change :</div>
<div style="position:absolute;left:607.5px;top:341.59999999999997px;width:76.0px;height:7.4px;background:#dad4c6;"></div>
<div class="t s" style="left:609.0px;top:344.5px;font-size:3.9px;color:#4a4a4a;font-weight:normal;">Design Improvement</div>
<div class="t s" style="left:680.5px;top:344.60px;width:40px;text-align:right;font-size:3.5px;color:#555">Estimated Cost :</div>
<div style="position:absolute;left:723.5px;top:341.59999999999997px;width:105.5px;height:7.4px;background:#dad4c6;"></div>
<div class="t s" style="left:725.0px;top:344.5px;font-size:3.9px;color:#4a4a4a;font-weight:normal;">135.00</div>
<div class="t s" style="left:564.5px;top:352.80px;width:40px;text-align:right;font-size:3.5px;color:#555">Design Authority :</div>
<div style="position:absolute;left:607.5px;top:349.79999999999995px;width:76.0px;height:7.4px;background:#dad4c6;"></div>
<div class="t s" style="left:609.0px;top:352.7px;font-size:3.9px;color:#4a4a4a;font-weight:normal;">Electrical and Software</div>
<div class="t s" style="left:680.5px;top:352.80px;width:40px;text-align:right;font-size:3.5px;color:#555">Class of Change :</div>
<div style="position:absolute;left:723.5px;top:349.79999999999995px;width:105.5px;height:7.4px;background:#dad4c6;"></div>
<div class="t s" style="left:725.0px;top:352.7px;font-size:3.9px;color:#4a4a4a;font-weight:normal;">Class 1</div>
<div style="position:absolute;left:567px;top:358px;width:266px;height:7.5px;background:#d8d2c4;"></div>
<div class="t s" style="left:569px;top:361px;font-size:3.8px;color:#4a4a4a;font-weight:normal;">Change Control Board (CCB)</div>
<div style="position:absolute;left:566px;top:366px;width:41px;height:32px;background:#f0ece1;"></div>
<div style="position:absolute;left:684px;top:366px;width:39px;height:24px;background:#f0ece1;"></div>
<div class="t s" style="left:564.5px;top:369.00px;width:40px;text-align:right;font-size:3.5px;color:#555">Project Engineer :</div>
<div style="position:absolute;left:607.5px;top:366.0px;width:76.0px;height:7.4px;background:#dad4c6;"></div>
<div class="t s" style="left:609.0px;top:368.9px;font-size:3.9px;color:#4a4a4a;font-weight:normal;">Bruce Sigfro</div>
<div class="t s" style="left:680.5px;top:369.00px;width:40px;text-align:right;font-size:3.5px;color:#555">Mfg Engineer :</div>
<div style="position:absolute;left:723.5px;top:366.0px;width:105.5px;height:7.4px;background:#dad4c6;"></div>
<div class="t s" style="left:725.0px;top:368.9px;font-size:3.9px;color:#4a4a4a;font-weight:normal;">Carl Burton</div>
<div class="t s" style="left:564.5px;top:377.00px;width:40px;text-align:right;font-size:3.5px;color:#555">Test Engineer :</div>
<div style="position:absolute;left:607.5px;top:374.0px;width:76.0px;height:7.4px;background:#dad4c6;"></div>
<div class="t s" style="left:609.0px;top:376.9px;font-size:3.9px;color:#4a4a4a;font-weight:normal;">Scott Hellmer</div>
<div class="t s" style="left:680.5px;top:377.00px;width:40px;text-align:right;font-size:3.5px;color:#555">Quality Engineer :</div>
<div style="position:absolute;left:723.5px;top:374.0px;width:105.5px;height:7.4px;background:#dad4c6;"></div>
<div class="t s" style="left:725.0px;top:376.9px;font-size:3.9px;color:#4a4a4a;font-weight:normal;">Kristin Allison</div>
<div class="t s" style="left:564.5px;top:385.00px;width:40px;text-align:right;font-size:3.5px;color:#555">Software Engineer :</div>
<div style="position:absolute;left:607.5px;top:382.0px;width:76.0px;height:7.4px;background:#dad4c6;"></div>
<div class="t s" style="left:680.5px;top:385.00px;width:40px;text-align:right;font-size:3.5px;color:#555">Configuration Admin :</div>
<div style="position:absolute;left:723.5px;top:382.0px;width:105.5px;height:7.4px;background:#dad4c6;"></div>
<div class="t s" style="left:725.0px;top:384.9px;font-size:3.9px;color:#4a4a4a;font-weight:normal;">Dana Williams</div>
<div class="t s" style="left:564.5px;top:393.00px;width:40px;text-align:right;font-size:3.5px;color:#555">CCB Instructions :</div>
<div style="position:absolute;left:607.5px;top:390.0px;width:221.5px;height:7.4px;background:#dad4c6;"></div>
<div style="position:absolute;left:567px;top:398.5px;width:266px;height:7.5px;background:#d8d2c4;"></div>
<div class="t s" style="left:569px;top:401.5px;font-size:3.8px;color:#4a4a4a;font-weight:normal;">Required Approvals</div>
<div style="position:absolute;left:566px;top:406px;width:41px;height:38px;background:#f0ece1;"></div>
<div style="position:absolute;left:684px;top:406px;width:39px;height:16px;background:#f0ece1;"></div>
<div style="position:absolute;left:684px;top:435px;width:39px;height:8px;background:#f0ece1;"></div>
<div class="t s" style="left:564.5px;top:409.40px;width:40px;text-align:right;font-size:3.5px;color:#555">Engineering Mgr :</div>
<div style="position:absolute;left:607.5px;top:406.4px;width:76.0px;height:7.4px;background:#dad4c6;"></div>
<div class="t s" style="left:609.0px;top:409.3px;font-size:3.9px;color:#4a4a4a;font-weight:normal;">Burt James</div>
<div class="t s" style="left:680.5px;top:409.40px;width:40px;text-align:right;font-size:3.5px;color:#555">Manufacturing Mgr :</div>
<div style="position:absolute;left:723.5px;top:406.4px;width:105.5px;height:7.4px;background:#dad4c6;"></div>
<div class="t s" style="left:725.0px;top:409.3px;font-size:3.9px;color:#4a4a4a;font-weight:normal;">John Tuffin</div>
<div class="t s" style="left:564.5px;top:417.60px;width:40px;text-align:right;font-size:3.5px;color:#555">QA Mgr :</div>
<div style="position:absolute;left:607.5px;top:414.59999999999997px;width:76.0px;height:7.4px;background:#dad4c6;"></div>
<div class="t s" style="left:609.0px;top:417.5px;font-size:3.9px;color:#4a4a4a;font-weight:normal;">Chris Dunhills</div>
<div class="t s" style="left:680.5px;top:417.60px;width:40px;text-align:right;font-size:3.5px;color:#555">Configuration Mgr :</div>
<div style="position:absolute;left:723.5px;top:414.59999999999997px;width:105.5px;height:7.4px;background:#dad4c6;"></div>
<div class="t s" style="left:725.0px;top:417.5px;font-size:3.9px;color:#4a4a4a;font-weight:normal;">Cheryl Anderson</div>
<div class="t" style="left:564.5px;top:424.6px;width:40px;text-align:right;font-size:3.5px;color:#555">Distribution List :</div>
<div style="position:absolute;left:607.5px;top:422.5px;width:221.5px;height:11px;background:#dad4c6;"></div>
<div style="position:absolute;left:608.7px;top:424.4px;width:59.3px;height:7.6px;background:#ebe7dc;border:1px solid #c2bcae;"></div>
<div style="position:absolute;left:621.5px;top:425px;width:0.8px;height:6.4px;background:#c8c2b4;"></div>
<div style="position:absolute;left:630px;top:425px;width:0.8px;height:6.4px;background:#c8c2b4;"></div>
<div style="position:absolute;left:649.5px;top:425px;width:0.8px;height:6.4px;background:#c8c2b4;"></div>
<div class="t s" style="left:611px;top:427.3px;font-size:3.5px;color:#4a4a4a;font-weight:normal;">Name</div>
<div class="t s" style="left:624px;top:427.3px;font-size:3.5px;color:#4a4a4a;font-weight:normal;">ID</div>
<div class="t s" style="left:631.5px;top:427.3px;font-size:3.5px;color:#4a4a4a;font-weight:normal;">Department</div>
<div class="t s" style="left:652px;top:427.3px;font-size:3.5px;color:#4a4a4a;font-weight:normal;">Members</div>
<div class="t s" style="left:564.5px;top:438.00px;width:40px;text-align:right;font-size:3.5px;color:#555">Class :</div>
<div style="position:absolute;left:607.5px;top:435.0px;width:76.0px;height:7.4px;background:#dad4c6;"></div>
<div class="t s" style="left:609.0px;top:437.9px;font-size:3.9px;color:#4a4a4a;font-weight:normal;">CMS Change Item ECO</div>
<div class="t s" style="left:680.5px;top:438.00px;width:40px;text-align:right;font-size:3.5px;color:#555">Version :</div>
<div style="position:absolute;left:723.5px;top:435.0px;width:105.5px;height:7.4px;background:#dad4c6;"></div>
<div class="t s" style="left:725.0px;top:437.9px;font-size:3.9px;color:#4a4a4a;font-weight:normal;">3</div>
</div></body></html>
